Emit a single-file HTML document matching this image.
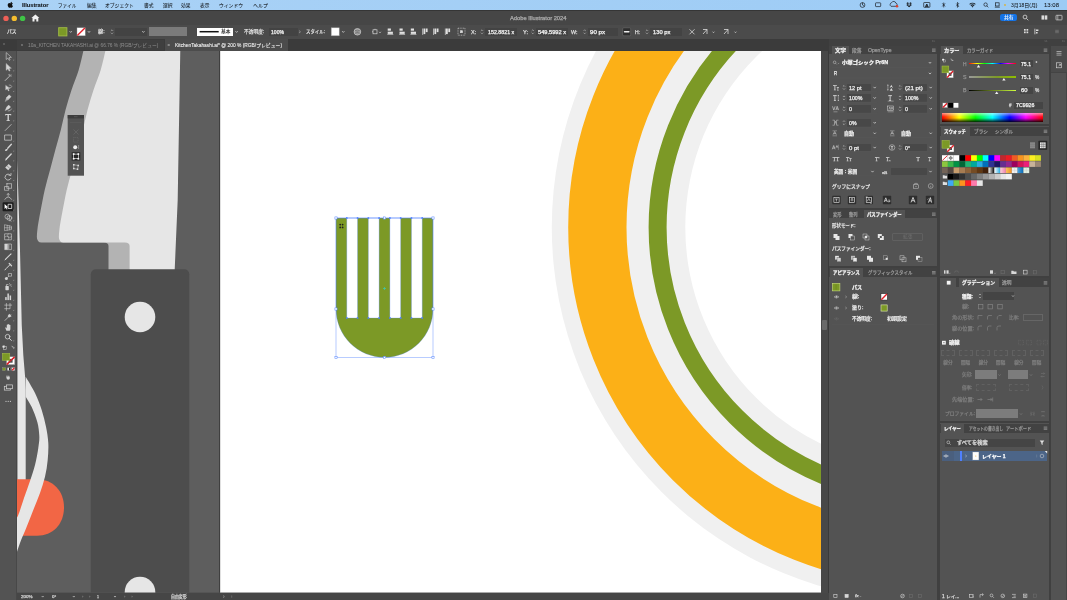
<!DOCTYPE html>
<html lang="ja"><head><meta charset="utf-8"><title>Adobe Illustrator 2024</title><style>
html,body{margin:0;padding:0;background:#535353;}
body{width:1067px;height:600px;overflow:hidden;position:relative;font-family:"Liberation Sans","Noto Sans CJK JP",sans-serif;}
#app{position:absolute;left:0;top:0;width:1067px;height:600px;overflow:hidden;will-change:transform;}
.a{position:absolute;box-sizing:border-box;}
.t{position:absolute;white-space:nowrap;line-height:1;transform-origin:0 50%;display:block;}
svg{position:absolute;left:0;top:0;overflow:visible}
</style></head><body><div id="app">
<svg width="1067" height="600" viewBox="0 0 1067 600"><defs><clipPath id="cv"><rect x="16.5" y="50.5" width="804.5" height="542.0"/></clipPath></defs><g clip-path="url(#cv)"><rect x="16.5" y="50.5" width="804.5" height="542.0" fill="#5e5e5e"/><rect x="220" y="50.5" width="700" height="600" fill="#fff"/><path d="M219.700 50V600" stroke="#303030" stroke-width="0.800"/><circle cx="925.8" cy="227.3" r="374" fill="#f0f0f0"/><circle cx="925.8" cy="227.3" r="328.45" fill="none" stroke="#fcb017" stroke-width="58.3"/><circle cx="925.8" cy="227.3" r="268.2" fill="none" stroke="#7c9926" stroke-width="18"/><circle cx="925.8" cy="227.3" r="240.5" fill="#fff"/><path d="M83.6 50.0C82.8 53.3 80.7 63.3 78.7 70.0C76.7 76.7 73.7 83.3 71.5 90.0C69.3 96.7 67.3 103.3 65.5 110.0C63.7 116.7 62.5 123.3 60.8 130.0C59.1 136.7 57.1 143.3 55.3 150.0C53.5 156.7 51.8 163.3 50.0 170.0C48.2 176.7 46.2 183.3 44.7 190.0C43.2 196.7 41.9 203.7 40.7 210.0C39.5 216.3 38.2 223.7 37.6 228.0C37.0 232.3 37.0 234.7 36.9 236.0Q36.5 242.4 41.5 242.4L104 242.4Q108.5 242.4 108.5 246L108.5 272L160 272L160 50Z" fill="#b3b3b3"/><path d="M105.6 50.0C104.8 53.3 102.7 63.3 100.7 70.0C98.7 76.7 95.7 83.3 93.5 90.0C91.3 96.7 89.3 103.3 87.5 110.0C85.7 116.7 84.5 123.3 82.8 130.0C81.1 136.7 79.1 143.3 77.3 150.0C75.5 156.7 73.8 163.3 72.0 170.0C70.2 176.7 68.2 183.3 66.7 190.0C65.2 196.7 63.9 203.7 62.7 210.0C61.5 216.3 60.2 223.7 59.6 228.0C59.0 232.3 59.0 234.7 58.9 236.0Q58.5 242.4 63.5 242.4L125 242.4Q129.6 242.4 129.6 246L129.6 272L174.6 272L177.7 200L180.3 50Z" fill="#e6e6e6"/><rect x="90.8" y="269.3" width="98.5" height="400" rx="5" fill="#4d4d4d"/><circle cx="140" cy="317" r="15.3" fill="#e6e6e6"/><circle cx="140" cy="592" r="15.3" fill="#e6e6e6"/><path d="M17.2 160L18.5 200L20 250L21.75 325L23.3 355L25.2 378L25.7 390L25.7 480L17.500 480L17.500 250Z" fill="#e6e6e6"/><path d="M10 479.3L37 479.3C53 479.3 64 491 64 507.5C64 524 53 535.7 37 535.7L10 535.7Z" fill="#f26645"/><path d="M25.7 376.7C27.2 379.4 32.3 387.4 35.0 393.0C37.7 398.6 39.9 404.4 41.7 410.0C43.5 415.6 44.9 421.2 46.0 426.7C47.1 432.2 48.0 437.4 48.3 443.0C48.6 448.6 48.2 454.4 47.7 460.0C47.2 465.6 46.3 471.2 45.0 476.7C43.7 482.2 42.0 487.4 40.0 493.0C38.0 498.6 35.5 504.4 33.3 510.0C31.1 515.6 28.9 521.2 26.7 526.7C24.5 532.2 21.9 537.8 20.0 543.0C18.1 548.2 15.8 555.5 15.0 558.0L15.0 520.0C15.6 519.2 16.8 518.7 18.3 515.0C19.8 511.3 22.1 503.7 24.0 498.0C25.9 492.3 28.2 486.5 30.0 481.0C31.8 475.5 33.6 470.5 35.0 465.0C36.4 459.5 37.6 452.8 38.3 448.0C39.0 443.2 39.5 440.3 39.3 436.0C39.1 431.7 38.6 426.8 37.3 422.0C36.0 417.2 33.6 411.2 31.7 407.0C29.8 402.8 26.7 398.4 25.7 396.7L25.7 376.7Z" fill="#e6e6e6"/><path d="M336.0 218.0L433.0 218.0L433.0 309A48.5 48.5 0 0 1 336.0 309ZM346.78 218.0L346.78 317Q346.78 318 347.78 318L356.56 318Q357.56 318 357.56 317L357.56 218.0ZM368.33 218.0L368.33 317Q368.33 318 369.33 318L378.11 318Q379.11 318 379.11 317L379.11 218.0ZM389.89 218.0L389.89 317Q389.89 318 390.89 318L399.67 318Q400.67 318 400.67 317L400.67 218.0ZM411.44 218.0L411.44 317Q411.44 318 412.44 318L421.22 318Q422.22 318 422.22 317L422.22 218.0Z" fill="#7c9926" fill-rule="evenodd"/><rect x="336.0" y="218.0" width="97.0" height="139.5" fill="none" stroke="#4f80ff" stroke-width="0.5" opacity="0.8"/><path d="M336.0 218.0L433.0 218.0L433.0 309A48.5 48.5 0 0 1 336.0 309ZM346.78 218.0L346.78 317Q346.78 318 347.78 318L356.56 318Q357.56 318 357.56 317L357.56 218.0ZM368.33 218.0L368.33 317Q368.33 318 369.33 318L378.11 318Q379.11 318 379.11 317L379.11 218.0ZM389.89 218.0L389.89 317Q389.89 318 390.89 318L399.67 318Q400.67 318 400.67 317L400.67 218.0ZM411.44 218.0L411.44 317Q411.44 318 412.44 318L421.22 318Q422.22 318 422.22 317L422.22 218.0Z" fill="none" stroke="#4f80ff" stroke-width="0.4" opacity="0.7"/><rect x="335.20" y="217.2" width="1.6" height="1.6" fill="#4f80ff"/><rect x="345.98" y="217.2" width="1.6" height="1.6" fill="#4f80ff"/><rect x="356.76" y="217.2" width="1.6" height="1.6" fill="#4f80ff"/><rect x="367.53" y="217.2" width="1.6" height="1.6" fill="#4f80ff"/><rect x="378.31" y="217.2" width="1.6" height="1.6" fill="#4f80ff"/><rect x="389.09" y="217.2" width="1.6" height="1.6" fill="#4f80ff"/><rect x="399.87" y="217.2" width="1.6" height="1.6" fill="#4f80ff"/><rect x="410.64" y="217.2" width="1.6" height="1.6" fill="#4f80ff"/><rect x="421.42" y="217.2" width="1.6" height="1.6" fill="#4f80ff"/><rect x="432.20" y="217.2" width="1.6" height="1.6" fill="#4f80ff"/><rect x="345.98" y="317.2" width="1.6" height="1.6" fill="#4f80ff"/><rect x="356.76" y="317.2" width="1.6" height="1.6" fill="#4f80ff"/><rect x="367.53" y="317.2" width="1.6" height="1.6" fill="#4f80ff"/><rect x="378.31" y="317.2" width="1.6" height="1.6" fill="#4f80ff"/><rect x="389.09" y="317.2" width="1.6" height="1.6" fill="#4f80ff"/><rect x="399.87" y="317.2" width="1.6" height="1.6" fill="#4f80ff"/><rect x="410.64" y="317.2" width="1.6" height="1.6" fill="#4f80ff"/><rect x="421.42" y="317.2" width="1.6" height="1.6" fill="#4f80ff"/><rect x="334.90" y="216.90" width="2.2" height="2.2" fill="#fff" stroke="#4f80ff" stroke-width="0.5"/><rect x="431.90" y="216.90" width="2.2" height="2.2" fill="#fff" stroke="#4f80ff" stroke-width="0.5"/><rect x="334.90" y="356.40" width="2.2" height="2.2" fill="#fff" stroke="#4f80ff" stroke-width="0.5"/><rect x="431.90" y="356.40" width="2.2" height="2.2" fill="#fff" stroke="#4f80ff" stroke-width="0.5"/><rect x="383.40" y="216.90" width="2.2" height="2.2" fill="#fff" stroke="#4f80ff" stroke-width="0.5"/><rect x="383.40" y="356.40" width="2.2" height="2.2" fill="#fff" stroke="#4f80ff" stroke-width="0.5"/><rect x="334.90" y="307.90" width="2.2" height="2.2" fill="#fff" stroke="#4f80ff" stroke-width="0.5"/><rect x="431.90" y="307.90" width="2.2" height="2.2" fill="#fff" stroke="#4f80ff" stroke-width="0.5"/><path d="M383 288.5h3M384.5 287v3" stroke="#3cc9b0" stroke-width="0.7"/><g fill="#222"><circle cx="340.2" cy="224.6" r="0.9"/><circle cx="342.6" cy="224.6" r="0.9"/><circle cx="340.2" cy="227.4" r="0.9"/><circle cx="342.6" cy="227.4" r="0.9"/></g></g></svg>
<div class="a" style="left:0px;top:0px;width:1067px;height:10px;background:linear-gradient(90deg,#aad2f6,#9ccbf5);"></div>
<span class="t" id="t1" style="left:22px;top:4px;font-size:4.9px;color:#14181c;font-weight:bold;-webkit-text-stroke:0.1px #14181c;transform:scaleX(1.170);">Illustrator</span>
<span class="t" id="t2" style="left:58px;top:4px;font-size:4.9px;color:#14181c;-webkit-text-stroke:0.05px #14181c;transform:scaleX(0.945);">ファイル</span>
<span class="t" id="t3" style="left:86.5px;top:4px;font-size:4.9px;color:#14181c;-webkit-text-stroke:0.05px #14181c;transform:scaleX(0.970);">編集</span>
<span class="t" id="t4" style="left:105.3px;top:4px;font-size:4.9px;color:#14181c;-webkit-text-stroke:0.05px #14181c;transform:scaleX(0.984);">オブジェクト</span>
<span class="t" id="t5" style="left:144.3px;top:4px;font-size:4.9px;color:#14181c;-webkit-text-stroke:0.05px #14181c;transform:scaleX(0.970);">書式</span>
<span class="t" id="t6" style="left:163px;top:4px;font-size:4.9px;color:#14181c;-webkit-text-stroke:0.05px #14181c;transform:scaleX(0.970);">選択</span>
<span class="t" id="t7" style="left:180.6px;top:4px;font-size:4.9px;color:#14181c;-webkit-text-stroke:0.05px #14181c;transform:scaleX(0.959);">効果</span>
<span class="t" id="t8" style="left:200px;top:4px;font-size:4.9px;color:#14181c;-webkit-text-stroke:0.05px #14181c;transform:scaleX(0.970);">表示</span>
<span class="t" id="t9" style="left:219px;top:4px;font-size:4.9px;color:#14181c;-webkit-text-stroke:0.05px #14181c;transform:scaleX(0.981);">ウィンドウ</span>
<span class="t" id="t10" style="left:253px;top:4px;font-size:4.9px;color:#14181c;-webkit-text-stroke:0.05px #14181c;transform:scaleX(1.021);">ヘルプ</span>
<span class="t" id="t11" style="left:1011px;top:4px;font-size:4.9px;color:#14181c;-webkit-text-stroke:0.05px #14181c;transform:scaleX(1.016);">3月18日(月)</span>
<span class="t" id="t12" style="left:1043.7px;top:4px;font-size:4.9px;color:#14181c;-webkit-text-stroke:0.05px #14181c;transform:scaleX(1.224);">13:08</span>
<span class="t" id="t13" style="left:925px;top:4px;font-size:4.2px;color:#1b2025;font-weight:bold;-webkit-text-stroke:0.25px #1b2025;transform:scaleX(1.188);">A</span>
<div class="a" style="left:0px;top:10px;width:1067px;height:14.5px;background:#464646;"></div>
<div class="a" style="left:0px;top:10px;width:1067px;height:0.8px;background:#353535;"></div>
<span class="t" id="t14" style="left:510px;top:17px;font-size:4.8px;color:#a8a8a8;-webkit-text-stroke:0.25px #a8a8a8;transform:scaleX(1.204);">Adobe Illustrator 2024</span>
<div class="a" style="left:1000px;top:13.7px;width:17.2px;height:7.6px;background:#1473e6;border-radius:2.2px;"></div>
<span class="t" id="t15" style="left:1003.8px;top:16px;font-size:4.6px;color:#fff;-webkit-text-stroke:0.1px #fff;transform:scaleX(1.043);">共有</span>
<div class="a" style="left:0px;top:24.5px;width:1067px;height:14.5px;background:#4b4b4b;"></div>
<span class="t" id="t16" style="left:6.5px;top:30px;font-size:4.8px;color:#dadada;-webkit-text-stroke:0.25px #dadada;transform:scaleX(0.989);">パス</span>
<span class="t" id="t17" style="left:98.4px;top:30px;font-size:4.8px;color:#dadada;-webkit-text-stroke:0.25px #dadada;transform:scaleX(1.075);">線:</span>
<div class="a" style="left:114.5px;top:27.6px;width:32px;height:8.4px;background:#434343;"></div>
<div class="a" style="left:149.4px;top:27.2px;width:37.8px;height:9px;background:#7b7b7b;"></div>
<div class="a" style="left:197.2px;top:27.6px;width:36px;height:8.2px;background:#fff;"></div>
<span class="t" id="t18" style="left:221px;top:30px;font-size:4.5px;color:#111;-webkit-text-stroke:0.1px #111;transform:scaleX(1.033);">基本</span>
<span class="t" id="t19" style="left:244.4px;top:30px;font-size:4.8px;color:#dadada;-webkit-text-stroke:0.25px #dadada;transform:scaleX(0.984);">不透明度:</span>
<div class="a" style="left:268.7px;top:27.6px;width:29px;height:8.4px;background:#434343;"></div>
<span class="t" id="t20" style="left:271px;top:31px;font-size:4.8px;color:#f0f0f0;-webkit-text-stroke:0.25px #f0f0f0;transform:scaleX(1.059);">100%</span>
<span class="t" id="t21" style="left:306px;top:30px;font-size:4.8px;color:#dadada;-webkit-text-stroke:0.25px #dadada;transform:scaleX(0.925);">スタイル:</span>
<span class="t" id="t22" style="left:471.3px;top:31px;font-size:4.8px;color:#dadada;-webkit-text-stroke:0.25px #dadada;transform:scaleX(1.144);">X:</span>
<div class="a" style="left:485px;top:27.6px;width:31.5px;height:8.4px;background:#434343;"></div>
<span class="t" id="t23" style="left:487.8px;top:31px;font-size:4.8px;color:#f0f0f0;-webkit-text-stroke:0.25px #f0f0f0;transform:scaleX(1.103);">152.8821 x</span>
<span class="t" id="t24" style="left:522.5px;top:31px;font-size:4.8px;color:#dadada;-webkit-text-stroke:0.25px #dadada;transform:scaleX(1.168);">Y:</span>
<div class="a" style="left:535.6px;top:27.6px;width:32px;height:8.4px;background:#434343;"></div>
<span class="t" id="t25" style="left:538.4px;top:31px;font-size:4.8px;color:#f0f0f0;-webkit-text-stroke:0.25px #f0f0f0;transform:scaleX(1.183);">549.5992 x</span>
<span class="t" id="t26" style="left:571px;top:31px;font-size:4.8px;color:#dadada;-webkit-text-stroke:0.25px #dadada;transform:scaleX(1.124);">W:</span>
<div class="a" style="left:587.7px;top:27.6px;width:30px;height:8.4px;background:#434343;"></div>
<span class="t" id="t27" style="left:590px;top:31px;font-size:4.8px;color:#f0f0f0;-webkit-text-stroke:0.25px #f0f0f0;transform:scaleX(1.277);">90 px</span>
<span class="t" id="t28" style="left:634.5px;top:31px;font-size:4.8px;color:#dadada;-webkit-text-stroke:0.25px #dadada;transform:scaleX(1.039);">H:</span>
<div class="a" style="left:650px;top:27.6px;width:31.5px;height:8.4px;background:#434343;"></div>
<span class="t" id="t29" style="left:652.7px;top:31px;font-size:4.8px;color:#f0f0f0;-webkit-text-stroke:0.25px #f0f0f0;transform:scaleX(1.201);">130 px</span>
<div class="a" style="left:0px;top:39px;width:1067px;height:11.5px;background:#3b3b3b;"></div>
<div class="a" style="left:17px;top:39.6px;width:147px;height:10.9px;background:#3f3f3f;"></div>
<div class="a" style="left:164.5px;top:39.4px;width:123px;height:11.2px;background:#4c4c4c;"></div>
<span class="t" id="t30" style="left:28px;top:44px;font-size:4.6px;color:#8e8e8e;transform:scaleX(1.045);">10a_KITCHEN TAKAHASHI.ai @ 66.76 % (RGB/プレビュー)</span>
<span class="t" id="t31" style="left:175px;top:44px;font-size:4.6px;color:#ececec;-webkit-text-stroke:0.1px #ececec;transform:scaleX(1.055);">KitchenTakahashi.ai* @ 200 % (RGB/プレビュー)</span>
<div class="a" style="left:0px;top:39px;width:17px;height:11.5px;background:#3b3b3b;"></div>
<div class="a" style="left:0px;top:50.5px;width:16.6px;height:549.5px;background:#535353;"></div>
<div class="a" style="left:16.2px;top:50.5px;width:0.5px;height:549.5px;background:#484848;"></div>
<div class="a" style="left:16.6px;top:592.7px;width:804.4px;height:7.3px;background:#464646;"></div>
<span class="t" id="t32" style="left:21px;top:595px;font-size:4.4px;color:#d0d0d0;-webkit-text-stroke:0.25px #d0d0d0;transform:scaleX(1.033);">200%</span>
<span class="t" id="t33" style="left:51.7px;top:595px;font-size:4.4px;color:#d0d0d0;-webkit-text-stroke:0.25px #d0d0d0;transform:scaleX(1.023);">0°</span>
<span class="t" id="t34" style="left:97px;top:595px;font-size:4.4px;color:#d0d0d0;-webkit-text-stroke:0.25px #d0d0d0;transform:scaleX(0.815);">1</span>
<span class="t" id="t35" style="left:171px;top:595px;font-size:4.2px;color:#d0d0d0;-webkit-text-stroke:0.25px #d0d0d0;transform:scaleX(0.936);">自由変形</span>
<div class="a" style="left:821px;top:50.5px;width:6.6px;height:549.5px;background:#484848;"></div>
<div class="a" style="left:827.6px;top:50.5px;width:2px;height:549.5px;background:#3a3a3a;"></div>
<div class="a" style="left:822px;top:320px;width:4.6px;height:9.5px;background:#6a6a6a;border-radius:1px;"></div>
<div class="a" style="left:821px;top:592.7px;width:8.6px;height:7.3px;background:#464646;"></div>
<div class="a" style="left:829px;top:39px;width:238px;height:561px;background:#404040;"></div>
<div class="a" style="left:829.3px;top:45.5px;width:108.2px;height:554.5px;background:#535353;"></div>
<div class="a" style="left:939.9px;top:45.5px;width:109.4px;height:554.5px;background:#535353;"></div>
<div class="a" style="left:1051.3px;top:45.6px;width:15.7px;height:554.4px;background:#535353;"></div>
<div class="a" style="left:1066.3px;top:45.6px;width:0.7px;height:554.4px;background:#454545;"></div>
<div class="a" style="left:829.3px;top:45.6px;width:108.2px;height:8.8px;background:#424242;"></div>
<div class="a" style="left:831.5px;top:45.6px;width:17.5px;height:8.8px;background:#535353;"></div>
<span class="t" id="t36" style="left:834.5px;top:49px;font-size:4.7px;color:#f4f4f4;font-weight:bold;-webkit-text-stroke:0.25px #f4f4f4;transform:scaleX(1.171);">文字</span>
<span class="t" id="t37" style="left:851.5px;top:49px;font-size:4.7px;color:#989898;-webkit-text-stroke:0.25px #989898;transform:scaleX(1.012);">段落</span>
<span class="t" id="t38" style="left:868px;top:49px;font-size:4.7px;color:#989898;-webkit-text-stroke:0.25px #989898;transform:scaleX(1.086);">OpenType</span>
<span class="t" id="t39" style="left:842px;top:61px;font-size:4.8px;color:#f4f4f4;font-weight:bold;-webkit-text-stroke:0.25px #f4f4f4;transform:scaleX(1.113);">小塚ゴシック Pr6N</span>
<span class="t" id="t40" style="left:833.7px;top:72px;font-size:4.8px;color:#ececec;-webkit-text-stroke:0.25px #ececec;transform:scaleX(0.894);">R</span>
<div class="a" style="left:847.3px;top:83.6px;width:24.2px;height:7.8px;background:#484848;border-radius:0.8px;"></div>
<span class="t" id="t41" style="left:849px;top:87px;font-size:4.8px;color:#ececec;-webkit-text-stroke:0.25px #ececec;transform:scaleX(1.171);">12 pt</span>
<div class="a" style="left:903.3px;top:83.6px;width:24.2px;height:7.8px;background:#484848;border-radius:0.8px;"></div>
<span class="t" id="t42" style="left:905px;top:87px;font-size:4.8px;color:#ececec;-webkit-text-stroke:0.25px #ececec;transform:scaleX(1.276);">(21 pt)</span>
<div class="a" style="left:847.3px;top:94px;width:24.2px;height:7.8px;background:#484848;border-radius:0.8px;"></div>
<span class="t" id="t43" style="left:849px;top:97px;font-size:4.8px;color:#ececec;-webkit-text-stroke:0.25px #ececec;transform:scaleX(1.099);">100%</span>
<div class="a" style="left:903.3px;top:94px;width:24.2px;height:7.8px;background:#484848;border-radius:0.8px;"></div>
<span class="t" id="t44" style="left:905px;top:97px;font-size:4.8px;color:#ececec;-webkit-text-stroke:0.25px #ececec;transform:scaleX(1.099);">100%</span>
<div class="a" style="left:847.3px;top:104.9px;width:24.2px;height:7.8px;background:#484848;border-radius:0.8px;"></div>
<span class="t" id="t45" style="left:849px;top:108px;font-size:4.8px;color:#ececec;-webkit-text-stroke:0.25px #ececec;transform:scaleX(1.123);">0</span>
<div class="a" style="left:903.3px;top:104.9px;width:24.2px;height:7.8px;background:#484848;border-radius:0.8px;"></div>
<span class="t" id="t46" style="left:905px;top:108px;font-size:4.8px;color:#ececec;-webkit-text-stroke:0.25px #ececec;transform:scaleX(1.123);">0</span>
<div class="a" style="left:847.3px;top:118.8px;width:24.2px;height:7.8px;background:#484848;border-radius:0.8px;"></div>
<span class="t" id="t47" style="left:849px;top:122px;font-size:4.8px;color:#ececec;-webkit-text-stroke:0.25px #ececec;transform:scaleX(1.081);">0%</span>
<span class="t" id="t48" style="left:843.5px;top:132px;font-size:4.8px;color:#ececec;font-weight:bold;-webkit-text-stroke:0.25px #ececec;transform:scaleX(1.041);">自動</span>
<span class="t" id="t49" style="left:900.5px;top:132px;font-size:4.8px;color:#ececec;font-weight:bold;-webkit-text-stroke:0.25px #ececec;transform:scaleX(1.041);">自動</span>
<div class="a" style="left:847.3px;top:143.6px;width:24.2px;height:7.8px;background:#484848;border-radius:0.8px;"></div>
<span class="t" id="t50" style="left:849px;top:147px;font-size:4.8px;color:#ececec;-webkit-text-stroke:0.25px #ececec;transform:scaleX(1.248);">0 pt</span>
<div class="a" style="left:903.3px;top:143.6px;width:24.2px;height:7.8px;background:#484848;border-radius:0.8px;"></div>
<span class="t" id="t51" style="left:905px;top:147px;font-size:4.8px;color:#ececec;-webkit-text-stroke:0.25px #ececec;transform:scaleX(1.088);">0°</span>
<span class="t" id="t52" style="left:832.8px;top:157px;font-size:5.2px;color:#d0d0d0;-webkit-text-stroke:0.25px #d0d0d0;font-family:'Liberation Serif',serif;">TT</span>
<span class="t" id="t53" style="left:846px;top:157px;font-size:5.2px;color:#d0d0d0;-webkit-text-stroke:0.25px #d0d0d0;font-family:'Liberation Serif',serif;">T</span>
<span class="t" id="t54" style="left:849.2px;top:159px;font-size:3.8px;color:#d0d0d0;-webkit-text-stroke:0.25px #d0d0d0;font-family:'Liberation Serif',serif;">T</span>
<span class="t" id="t55" style="left:875px;top:157px;font-size:5.2px;color:#d0d0d0;-webkit-text-stroke:0.25px #d0d0d0;font-family:'Liberation Serif',serif;">T</span>
<span class="t" id="t56" style="left:878.3px;top:157px;font-size:2.6px;color:#d0d0d0;-webkit-text-stroke:0.25px #d0d0d0;font-family:'Liberation Serif',serif;">1</span>
<span class="t" id="t57" style="left:886px;top:157px;font-size:5.2px;color:#d0d0d0;-webkit-text-stroke:0.25px #d0d0d0;font-family:'Liberation Serif',serif;">T</span>
<span class="t" id="t58" style="left:889.3px;top:160px;font-size:2.6px;color:#d0d0d0;-webkit-text-stroke:0.25px #d0d0d0;font-family:'Liberation Serif',serif;">1</span>
<span class="t" id="t59" style="left:916.5px;top:157px;font-size:5.2px;color:#d0d0d0;-webkit-text-stroke:0.25px #d0d0d0;font-family:'Liberation Serif',serif;">T</span>
<span class="t" id="t60" style="left:928px;top:157px;font-size:5.2px;color:#d0d0d0;-webkit-text-stroke:0.25px #d0d0d0;font-family:'Liberation Serif',serif;">T</span>
<span class="t" id="t61" style="left:833.5px;top:170px;font-size:4.8px;color:#ececec;font-weight:bold;-webkit-text-stroke:0.25px #ececec;transform:scaleX(0.958);">英語：米国</span>
<span class="t" id="t62" style="left:881.5px;top:172px;font-size:3.8px;color:#cfcfcf;-webkit-text-stroke:0.25px #cfcfcf;transform:scaleX(1.176);">a</span>
<span class="t" id="t63" style="left:884px;top:170px;font-size:5px;color:#cfcfcf;-webkit-text-stroke:0.25px #cfcfcf;transform:scaleX(1.151);">a</span>
<div class="a" style="left:890.7px;top:167.6px;width:36.5px;height:7.8px;background:#484848;border-radius:0.8px;"></div>
<span class="t" id="t64" style="left:832px;top:185px;font-size:4.8px;color:#e4e4e4;-webkit-text-stroke:0.25px #e4e4e4;transform:scaleX(0.990);">グリフにスナップ</span>
<div class="a" style="left:829.3px;top:207.5px;width:108.2px;height:2.2px;background:#404040;"></div>
<div class="a" style="left:829.3px;top:209.7px;width:108.2px;height:8.6px;background:#424242;"></div>
<span class="t" id="t65" style="left:833px;top:213px;font-size:4.7px;color:#989898;-webkit-text-stroke:0.25px #989898;transform:scaleX(0.905);">変形</span>
<span class="t" id="t66" style="left:848.8px;top:213px;font-size:4.7px;color:#989898;-webkit-text-stroke:0.25px #989898;transform:scaleX(0.905);">整列</span>
<div class="a" style="left:864px;top:209.7px;width:41px;height:8.6px;background:#535353;"></div>
<span class="t" id="t67" style="left:867px;top:213px;font-size:4.7px;color:#f4f4f4;font-weight:bold;-webkit-text-stroke:0.25px #f4f4f4;transform:scaleX(0.920);">パスファインダー</span>
<span class="t" id="t68" style="left:832px;top:224px;font-size:4.7px;color:#e4e4e4;-webkit-text-stroke:0.25px #e4e4e4;transform:scaleX(0.949);">形状モード:</span>
<div class="a" style="left:892px;top:232.6px;width:31px;height:8.6px;border:0.4px solid #606060;border-radius:1px;"></div>
<span class="t" id="t69" style="left:902.5px;top:235px;font-size:4.6px;color:#707070;transform:scaleX(1.032);">拡張</span>
<span class="t" id="t70" style="left:832px;top:247px;font-size:4.7px;color:#e4e4e4;-webkit-text-stroke:0.25px #e4e4e4;transform:scaleX(0.992);">パスファインダー:</span>
<div class="a" style="left:829.3px;top:265.8px;width:108.2px;height:2.2px;background:#404040;"></div>
<div class="a" style="left:829.3px;top:268px;width:108.2px;height:9px;background:#424242;"></div>
<div class="a" style="left:830.3px;top:268px;width:33.2px;height:9px;background:#535353;"></div>
<span class="t" id="t71" style="left:833.3px;top:271px;font-size:4.7px;color:#f4f4f4;font-weight:bold;-webkit-text-stroke:0.25px #f4f4f4;transform:scaleX(0.952);">アピアランス</span>
<span class="t" id="t72" style="left:867.5px;top:271px;font-size:4.7px;color:#989898;-webkit-text-stroke:0.25px #989898;transform:scaleX(0.954);">グラフィックスタイル</span>
<span class="t" id="t73" style="left:852px;top:286px;font-size:4.8px;color:#f4f4f4;font-weight:bold;-webkit-text-stroke:0.25px #f4f4f4;transform:scaleX(1.041);">パス</span>
<span class="t" id="t74" style="left:852px;top:295px;font-size:4.8px;color:#ececec;-webkit-text-stroke:0.25px #ececec;transform:scaleX(1.221);">線:</span>
<span class="t" id="t75" style="left:852px;top:306px;font-size:4.8px;color:#ececec;-webkit-text-stroke:0.25px #ececec;transform:scaleX(1.051);">塗り:</span>
<span class="t" id="t76" style="left:852px;top:317px;font-size:4.8px;color:#ececec;-webkit-text-stroke:0.25px #ececec;transform:scaleX(0.974);">不透明度:</span>
<span class="t" id="t77" style="left:886.7px;top:317px;font-size:4.8px;color:#ececec;-webkit-text-stroke:0.25px #ececec;transform:scaleX(1.041);">初期設定</span>
<span class="t" id="t78" style="left:855.2px;top:594px;font-size:4px;color:#d8d8d8;-webkit-text-stroke:0.25px #d8d8d8;transform:scaleX(1.216);font-style:italic;">fx</span>
<div class="a" style="left:939.9px;top:45.6px;width:109.4px;height:8.8px;background:#424242;"></div>
<div class="a" style="left:941px;top:45.6px;width:22px;height:8.8px;background:#535353;"></div>
<span class="t" id="t79" style="left:944px;top:49px;font-size:4.7px;color:#f4f4f4;font-weight:bold;-webkit-text-stroke:0.25px #f4f4f4;transform:scaleX(1.101);">カラー</span>
<span class="t" id="t80" style="left:966.8px;top:49px;font-size:4.7px;color:#989898;-webkit-text-stroke:0.25px #989898;transform:scaleX(0.931);">カラーガイド</span>
<span class="t" id="t81" style="left:962.5px;top:63px;font-size:4.8px;color:#8e8e8e;-webkit-text-stroke:0.25px #8e8e8e;transform:scaleX(1.009);">H</span>
<div class="a" style="left:968.7px;top:62.9px;width:47.3px;height:1.5px;background:linear-gradient(90deg,#f00,#ff0 17%,#0f0 33%,#0ff 50%,#00f 67%,#f0f 83%,#f00);"></div>
<div class="a" style="left:1019.5px;top:60.3px;width:13px;height:6.8px;background:#454545;"></div>
<span class="t" id="t82" style="left:1021px;top:63px;font-size:4.8px;color:#f0f0f0;-webkit-text-stroke:0.25px #f0f0f0;transform:scaleX(1.070);">75.1</span>
<span class="t" id="t83" style="left:1035.5px;top:62px;font-size:4.8px;color:#d8d8d8;-webkit-text-stroke:0.25px #d8d8d8;">°</span>
<span class="t" id="t84" style="left:962.5px;top:76px;font-size:4.8px;color:#8e8e8e;-webkit-text-stroke:0.25px #8e8e8e;transform:scaleX(1.093);">S</span>
<div class="a" style="left:968.7px;top:76.1px;width:47.3px;height:1.5px;background:linear-gradient(90deg,#999,#7c9926 60%,#8fbf00);"></div>
<div class="a" style="left:1019.5px;top:73.5px;width:13px;height:6.8px;background:#454545;"></div>
<span class="t" id="t85" style="left:1021px;top:76px;font-size:4.8px;color:#f0f0f0;-webkit-text-stroke:0.25px #f0f0f0;transform:scaleX(1.070);">75.1</span>
<span class="t" id="t86" style="left:1035px;top:76px;font-size:4.8px;color:#d8d8d8;-webkit-text-stroke:0.25px #d8d8d8;">%</span>
<span class="t" id="t87" style="left:962.5px;top:89px;font-size:4.8px;color:#8e8e8e;-webkit-text-stroke:0.25px #8e8e8e;transform:scaleX(1.093);">B</span>
<div class="a" style="left:968.7px;top:89.5px;width:47.3px;height:1.5px;background:linear-gradient(90deg,#000,#7c9926 60%,#cfff3f);"></div>
<div class="a" style="left:1019.5px;top:86.9px;width:13px;height:6.8px;background:#454545;"></div>
<span class="t" id="t88" style="left:1021px;top:89px;font-size:4.8px;color:#f0f0f0;-webkit-text-stroke:0.25px #f0f0f0;transform:scaleX(1.216);">60</span>
<span class="t" id="t89" style="left:1035px;top:89px;font-size:4.8px;color:#d8d8d8;-webkit-text-stroke:0.25px #d8d8d8;">%</span>
<span class="t" id="t90" style="left:1008.5px;top:104px;font-size:4.8px;color:#d0d0d0;-webkit-text-stroke:0.25px #d0d0d0;transform:scaleX(0.936);">#</span>
<div class="a" style="left:1014px;top:101.9px;width:28.5px;height:7px;background:#454545;"></div>
<span class="t" id="t91" style="left:1016px;top:104px;font-size:4.8px;color:#f0f0f0;-webkit-text-stroke:0.25px #f0f0f0;transform:scaleX(1.100);">7C9926</span>
<div class="a" style="left:942px;top:112.5px;width:100.8px;height:9.6px;background:linear-gradient(180deg,rgba(255,255,255,.55),rgba(255,255,255,0) 45%,rgba(0,0,0,0) 55%,rgba(0,0,0,.85)),linear-gradient(90deg,#f00,#ff0 17%,#0f0 33%,#0ff 50%,#00f 67%,#f0f 83%,#f00);"></div>
<div class="a" style="left:939.9px;top:124.3px;width:109.4px;height:2.2px;background:#404040;"></div>
<div class="a" style="left:939.9px;top:126.5px;width:109.4px;height:9.3px;background:#424242;"></div>
<div class="a" style="left:941px;top:126.5px;width:28.5px;height:9.3px;background:#535353;"></div>
<span class="t" id="t92" style="left:944px;top:130px;font-size:4.7px;color:#f4f4f4;font-weight:bold;-webkit-text-stroke:0.25px #f4f4f4;transform:scaleX(0.938);">スウォッチ</span>
<span class="t" id="t93" style="left:973.5px;top:130px;font-size:4.7px;color:#989898;-webkit-text-stroke:0.25px #989898;transform:scaleX(0.987);">ブラシ</span>
<span class="t" id="t94" style="left:994.8px;top:130px;font-size:4.7px;color:#989898;-webkit-text-stroke:0.25px #989898;transform:scaleX(0.954);">シンボル</span>
<div class="a" style="left:939.9px;top:276px;width:109.4px;height:2.2px;background:#404040;"></div>
<div class="a" style="left:939.9px;top:278.2px;width:109.4px;height:9px;background:#424242;"></div>
<div class="a" style="left:959px;top:278.2px;width:39.5px;height:9px;background:#535353;"></div>
<span class="t" id="t95" style="left:962px;top:281px;font-size:4.7px;color:#f4f4f4;font-weight:bold;-webkit-text-stroke:0.25px #f4f4f4;transform:scaleX(1.008);">グラデーション</span>
<span class="t" id="t96" style="left:1002px;top:281px;font-size:4.7px;color:#989898;-webkit-text-stroke:0.25px #989898;transform:scaleX(1.012);">透明</span>
<div class="a" style="left:939.9px;top:278.2px;width:16px;height:9px;background:#535353;"></div>
<span class="t" id="t97" style="left:962px;top:295px;font-size:4.7px;color:#f4f4f4;font-weight:bold;-webkit-text-stroke:0.25px #f4f4f4;transform:scaleX(0.987);">種類:</span>
<div class="a" style="left:983.3px;top:292.3px;width:31px;height:7.6px;background:#444;"></div>
<span class="t" id="t98" style="left:962px;top:305px;font-size:4.7px;color:#7d7d7d;-webkit-text-stroke:0.25px #7d7d7d;transform:scaleX(1.250);">線:</span>
<span class="t" id="t99" style="left:952px;top:316px;font-size:4.7px;color:#7d7d7d;-webkit-text-stroke:0.25px #7d7d7d;transform:scaleX(1.097);">角の形状:</span>
<span class="t" id="t100" style="left:1008.7px;top:316px;font-size:4.7px;color:#7d7d7d;-webkit-text-stroke:0.25px #7d7d7d;transform:scaleX(0.964);">比率:</span>
<div class="a" style="left:1023.3px;top:313.8px;width:20px;height:7.2px;border:0.4px solid #666;"></div>
<span class="t" id="t101" style="left:952px;top:327px;font-size:4.7px;color:#7d7d7d;-webkit-text-stroke:0.25px #7d7d7d;transform:scaleX(1.097);">線の位置:</span>
<span class="t" id="t102" style="left:948.7px;top:341px;font-size:4.7px;color:#f4f4f4;font-weight:bold;-webkit-text-stroke:0.25px #f4f4f4;transform:scaleX(1.129);">破線</span>
<div class="a" style="left:940.9px;top:349.5px;width:14px;height:6.6px;border:0.4px dashed #616161;"></div>
<div class="a" style="left:958.5px;top:349.5px;width:14px;height:6.6px;border:0.4px dashed #616161;"></div>
<div class="a" style="left:976.3px;top:349.5px;width:14px;height:6.6px;border:0.4px dashed #616161;"></div>
<div class="a" style="left:993.7px;top:349.5px;width:14px;height:6.6px;border:0.4px dashed #616161;"></div>
<div class="a" style="left:1011.8px;top:349.5px;width:14px;height:6.6px;border:0.4px dashed #616161;"></div>
<div class="a" style="left:1029.7px;top:349.5px;width:14px;height:6.6px;border:0.4px dashed #616161;"></div>
<span class="t" id="t103" style="left:943.3px;top:361px;font-size:4.6px;color:#7d7d7d;-webkit-text-stroke:0.25px #7d7d7d;transform:scaleX(1.000);">線分</span>
<span class="t" id="t104" style="left:960.9px;top:361px;font-size:4.6px;color:#7d7d7d;-webkit-text-stroke:0.25px #7d7d7d;transform:scaleX(1.000);">間隔</span>
<span class="t" id="t105" style="left:978.7px;top:361px;font-size:4.6px;color:#7d7d7d;-webkit-text-stroke:0.25px #7d7d7d;transform:scaleX(1.000);">線分</span>
<span class="t" id="t106" style="left:996.1px;top:361px;font-size:4.6px;color:#7d7d7d;-webkit-text-stroke:0.25px #7d7d7d;transform:scaleX(1.000);">間隔</span>
<span class="t" id="t107" style="left:1014.2px;top:361px;font-size:4.6px;color:#7d7d7d;-webkit-text-stroke:0.25px #7d7d7d;transform:scaleX(1.000);">線分</span>
<span class="t" id="t108" style="left:1032.1px;top:361px;font-size:4.6px;color:#7d7d7d;-webkit-text-stroke:0.25px #7d7d7d;transform:scaleX(1.000);">間隔</span>
<span class="t" id="t109" style="left:962px;top:373px;font-size:4.7px;color:#7d7d7d;-webkit-text-stroke:0.25px #7d7d7d;transform:scaleX(0.964);">矢印:</span>
<div class="a" style="left:975.3px;top:370px;width:21.4px;height:9.2px;background:#7c7c7c;"></div>
<div class="a" style="left:1008px;top:370px;width:20px;height:9.2px;background:#7c7c7c;"></div>
<span class="t" id="t110" style="left:962px;top:386px;font-size:4.7px;color:#7d7d7d;-webkit-text-stroke:0.25px #7d7d7d;transform:scaleX(0.964);">倍率:</span>
<div class="a" style="left:976px;top:384px;width:20px;height:7px;border:0.4px dashed #616161;"></div>
<div class="a" style="left:1008.5px;top:384px;width:20px;height:7px;border:0.4px dashed #616161;"></div>
<span class="t" id="t111" style="left:952px;top:398px;font-size:4.7px;color:#7d7d7d;-webkit-text-stroke:0.25px #7d7d7d;transform:scaleX(1.097);">先端位置:</span>
<span class="t" id="t112" style="left:944.7px;top:412px;font-size:4.7px;color:#7d7d7d;-webkit-text-stroke:0.25px #7d7d7d;transform:scaleX(1.019);">プロファイル:</span>
<div class="a" style="left:976px;top:409.3px;width:42px;height:8.8px;background:#7c7c7c;"></div>
<div class="a" style="left:939.9px;top:421.3px;width:109.4px;height:2.2px;background:#404040;"></div>
<div class="a" style="left:939.9px;top:423.5px;width:109.4px;height:9px;background:#424242;"></div>
<div class="a" style="left:941px;top:423.5px;width:23.2px;height:9px;background:#535353;"></div>
<span class="t" id="t113" style="left:944px;top:427px;font-size:4.7px;color:#f4f4f4;font-weight:bold;-webkit-text-stroke:0.25px #f4f4f4;transform:scaleX(0.897);">レイヤー</span>
<span class="t" id="t114" style="left:968.7px;top:427px;font-size:4.7px;color:#989898;-webkit-text-stroke:0.25px #989898;transform:scaleX(0.810);">アセットの書き出し</span>
<span class="t" id="t115" style="left:1006px;top:427px;font-size:4.7px;color:#989898;-webkit-text-stroke:0.25px #989898;transform:scaleX(0.908);">アートボード</span>
<div class="a" style="left:944.7px;top:438.7px;width:90.2px;height:8px;background:#454545;"></div>
<span class="t" id="t116" style="left:956.7px;top:441px;font-size:4.7px;color:#d6d6d6;font-weight:bold;-webkit-text-stroke:0.25px #d6d6d6;transform:scaleX(1.112);">すべてを検索</span>
<div class="a" style="left:942px;top:450.7px;width:105.4px;height:10.7px;background:#4c6588;"></div>
<div class="a" style="left:942px;top:450.7px;width:12px;height:10.7px;background:#4a5f7e;"></div>
<div class="a" style="left:960px;top:451.3px;width:1.7px;height:9.5px;background:#4f80ff;"></div>
<span class="t" id="t117" style="left:982px;top:455px;font-size:4.8px;color:#fff;font-weight:bold;-webkit-text-stroke:0.25px #fff;transform:scaleX(1.020);">レイヤー 1</span>
<span class="t" id="t118" style="left:942px;top:595px;font-size:4.5px;color:#dcdcdc;-webkit-text-stroke:0.25px #dcdcdc;transform:scaleX(1.047);">1 レイ...</span>
<div class="a" style="left:1051.3px;top:45.6px;width:15.7px;height:27px;background:#4b4b4b;"></div>
<div class="a" style="left:1051.3px;top:72.4px;width:15.7px;height:0.6px;background:#444;"></div>
<svg width="1067" height="600" viewBox="0 0 1067 600"><path d="M11.9 3.1c-.5 0-1 .3-1.3.3-.3 0-.8-.3-1.2-.3-.9 0-1.7.8-1.7 2 0 1.300.9 2.700 1.600 2.700.400 0 .6-.25 1.100-.25s.65.25 1.100.25c.7 0 1.300-1.100 1.500-1.700-.7-.3-.95-.9-.95-1.400 0-.6.35-1.100.8-1.300-.3-.4-.7-.6-1.050-.6zM11.500 2.900c.3-.3.45-.75.4-1.200-.4.05-.8.3-1.050.6-.25.3-.4.7-.35 1.100.4 0 .75-.2 1-.5z" fill="#111"/><g fill="none" stroke="#1b2025" stroke-width="0.7"><circle cx="862.5" cy="5" r="2.4"/><path d="M862.5 5v-2.400M862.500 5l1.800 1.300" /><rect x="875.5" y="2.800" width="5.200" height="3.800" rx="0.6"/><path d="M891 6.300a2 2 0 0 1 .600-3.600a2.300 2.300 0 0 1 4.300.500a1.600 1.600 0 0 1 .100 3.100z"/><rect x="923.700" y="2.500" width="6.200" height="4.800" rx="0.5"/><path d="M942.300 3.400l2.800 3M945.100 3.400l-2.800 3M943.700 2.600v4.800"/><path d="M956.300 3.600l2.400 2.600-1.200 1.200v-5l1.200 1.200-2.400 2.600"/><circle cx="985.600" cy="4.600" r="1.700"/><path d="M986.800 5.800l1.500 1.600"/><rect x="995.500" y="2.800" width="3.600" height="3.200"/><path d="M994.800 7.200h5"/></g><circle cx="897" cy="6.3" r="1.300" fill="#e0402a"/><path d="M906.300 3.200l1.400-.9 1.400.9-1.400.9zM909.100 3.200l1.400-.9 1.400.9-1.400.9zM906.300 5l1.400-.9 1.400.9-1.400.9zM909.100 5l1.400-.9 1.400.9-1.400.9zM907.700 6.300l1.400-.9 1.400.9-1.400.9z" fill="#1b2025"/><path d="M969.300 4.100a4.600 4.600 0 0 1 6.400 0l-.7.700a3.600 3.600 0 0 0-5 0zM970.500 5.300a2.900 2.900 0 0 1 4 0l-.7.700a1.900 1.900 0 0 0-2.600 0zM972.500 7.500l-1-1a1.400 1.400 0 0 1 2 0z" fill="#1b2025"/><circle cx="1005" cy="5" r="0.900" fill="#d9b23a"/><circle cx="6" cy="18.4" r="2.700" fill="#ed5f57"/><circle cx="14.300" cy="18.400" r="2.700" fill="#f5bd2e"/><circle cx="22.600" cy="18.400" r="2.700" fill="#3fc446"/><path d="M35.400 14.600l4 3.500h-1.100v3.400h-2v-2.300h-1.800v2.300h-2v-3.400h-1.100z" fill="#f0f0f0"/><g fill="none" stroke="#d8d8d8" stroke-width="0.8"><circle cx="1025" cy="17" r="1.900"/><path d="M1026.400 18.400l1.900 1.900"/></g><rect x="1041.500" y="15.400" width="2.600" height="4.200" fill="#dcdcdc"/><rect x="1044.700" y="15.400" width="2.600" height="4.200" fill="#dcdcdc"/><rect x="1056" y="15.300" width="6" height="4.600" rx="0.500" fill="none" stroke="#dcdcdc" stroke-width="0.700"/><path d="M1057.800 15.300v4.600" stroke="#dcdcdc" stroke-width="0.600"/><rect x="58.700" y="27.700" width="8.200" height="8.200" fill="#7c9926" stroke="#a3bd45" stroke-width="0.900"/><path d="M69.55 31.15L70.70 32.45L71.85 31.15" fill="none" stroke="#d4d4d4" stroke-width="0.75"/><rect x="77" y="27.8" width="8.2" height="8" fill="#fff" stroke="#999" stroke-width="0.4"/><path d="M77.3 35.5L84.9 28.1" stroke="#e0202a" stroke-width="1.400"/><path d="M87.85 31.15L89.00 32.45L90.15 31.15" fill="none" stroke="#d4d4d4" stroke-width="0.75"/><path d="M110.90 30.90L112.00 29.80L113.10 30.90M110.90 32.70L112.00 33.80L113.10 32.70" fill="none" stroke="#c8c8c8" stroke-width="0.6"/><path d="M142.25 31.15L143.40 32.45L144.55 31.15" fill="none" stroke="#d4d4d4" stroke-width="0.75"/><path d="M199.600 31.700h19.100" stroke="#111" stroke-width="1.500"/><path d="M235.45 31.15L236.60 32.45L237.75 31.15" fill="none" stroke="#d4d4d4" stroke-width="0.75"/><path d="M299.20 30.70L300.40 31.80L299.20 32.90" fill="none" stroke="#c8c8c8" stroke-width="0.6"/><rect x="331.200" y="27.800" width="8" height="8" fill="#fff" stroke="#999" stroke-width="0.500"/><path d="M342.15 31.15L343.30 32.45L344.45 31.15" fill="none" stroke="#d4d4d4" stroke-width="0.75"/><circle cx="357.400" cy="31.800" r="3.300" fill="#9a9a9a" stroke="#d0d0d0" stroke-width="0.700"/><path d="M355 30.300q2.400 1.500 4.800 0M355 33.300q2.400-1.500 4.800 0" stroke="#555" stroke-width="0.500" fill="none"/><g stroke="#d8d8d8" stroke-width="0.700" fill="none"><rect x="373" y="29.800" width="4" height="4"/><path d="M372 31.800h1M375 28.800v1"/></g><path d="M379.10 31.80L380.00 32.80L380.90 31.80" fill="none" stroke="#d4d4d4" stroke-width="0.75"/><g fill="#e0e0e0"><rect x="387.7" y="28.5" width="3.200" height="2.200"/><rect x="387.7" y="31.7" width="5.200" height="2.200"/><rect x="387.3" y="34.3" width="6" height="0.600"/></g><g fill="#e0e0e0"><rect x="399.5" y="28.5" width="3.200" height="2.200"/><rect x="399.5" y="31.7" width="5.200" height="2.200"/><rect x="399.1" y="34.3" width="6" height="0.600"/></g><g fill="#e0e0e0"><rect x="410.79999999999995" y="28.5" width="3.200" height="2.200"/><rect x="410.79999999999995" y="31.7" width="5.200" height="2.200"/><rect x="410.4" y="34.3" width="6" height="0.600"/></g><g fill="#e0e0e0"><rect x="422.4" y="28.5" width="0.700" height="6.400"/><rect x="423.5" y="28.5" width="1.800" height="5.600"/><rect x="425.8" y="28.5" width="1.800" height="3.600"/></g><g fill="#e0e0e0"><rect x="433.29999999999995" y="28.5" width="0.700" height="6.400"/><rect x="434.4" y="28.5" width="1.800" height="5.600"/><rect x="436.7" y="28.5" width="1.800" height="3.600"/></g><g fill="#e0e0e0"><rect x="444.9" y="28.5" width="0.700" height="6.400"/><rect x="446.0" y="28.5" width="1.800" height="5.600"/><rect x="448.3" y="28.5" width="1.800" height="3.600"/></g><g stroke="#dcdcdc" stroke-width="0.600" fill="none"><rect x="458" y="28.200" width="7" height="7" stroke-dasharray="1 0.700"/><rect x="460.500" y="30.700" width="2" height="2" fill="#dcdcdc"/></g><path d="M480.90 30.90L482.00 29.80L483.10 30.90M480.90 32.70L482.00 33.80L483.10 32.70" fill="none" stroke="#c8c8c8" stroke-width="0.6"/><path d="M531.70 30.90L532.80 29.80L533.90 30.90M531.70 32.70L532.80 33.80L533.90 32.70" fill="none" stroke="#c8c8c8" stroke-width="0.6"/><path d="M583.60 30.90L584.70 29.80L585.80 30.90M583.60 32.70L584.70 33.80L585.80 32.70" fill="none" stroke="#c8c8c8" stroke-width="0.6"/><rect x="622.700" y="27.800" width="8" height="8" rx="1" fill="#2e2e2e" stroke="#777" stroke-width="0.500"/><path d="M624.500 31.800h4.400" stroke="#eee" stroke-width="1.400" stroke-linecap="round"/><path d="M645.90 30.90L647.00 29.80L648.10 30.90M645.90 32.70L647.00 33.80L648.10 32.70" fill="none" stroke="#c8c8c8" stroke-width="0.6"/><g stroke="#dcdcdc" stroke-width="0.800" fill="none"><path d="M689.500 29.300l5 5M694.500 29.300l-5 5"/><path d="M703 29.500h4v4.500M703 34l4-4.500M724 29.500h4v4.500M724 34l4-4.500"/></g><path d="M712.60 31.70L713.50 32.70L714.40 31.70" fill="none" stroke="#d4d4d4" stroke-width="0.75"/><path d="M734.60 31.70L735.50 32.70L736.40 31.70" fill="none" stroke="#d4d4d4" stroke-width="0.75"/><g fill="#dcdcdc"><rect x="1024" y="29" width="1.700" height="1.700"/><rect x="1026.500" y="29" width="1.700" height="1.700"/><rect x="1024" y="31.500" width="1.700" height="1.700"/><rect x="1026.500" y="31.500" width="1.700" height="1.700"/><rect x="1034.500" y="28.700" width="0.800" height="5.600"/><rect x="1036" y="29.500" width="2.400" height="1.500"/><rect x="1036" y="32" width="1.600" height="1.500"/></g><path d="M1055.2 30.3h3.6M1055.2 31.5h3.6M1055.2 32.7h3.6" stroke="#8a8a8a" stroke-width="0.5"/><path d="M21.200 44.200l1.600 1.600M22.800 44.200l-1.600 1.600" stroke="#aaa" stroke-width="0.500"/><path d="M167.900 44.200l1.600 1.600M169.500 44.200l-1.600 1.600" stroke="#eee" stroke-width="0.500"/><path d="M3 43.500h2M3 44.500h2" stroke="#888" stroke-width="0.400"/><rect x="2.600" y="202.300" width="11" height="8.900" rx="0.800" fill="#1c1c1c"/><g transform="translate(8.2 56.5)" fill="none" stroke="#d4d4d4" stroke-width="0.800" stroke-linecap="round" stroke-linejoin="round"><path d="M-2 -3.500L-2 3L-0.300 1.500L0.900 3.800L1.900 3.300L0.800 1.100L2.800 0.900Z" stroke-width="0.600"/></g><g transform="translate(8.2 67.3)" fill="none" stroke="#d4d4d4" stroke-width="0.800" stroke-linecap="round" stroke-linejoin="round"><path d="M-2 -3.500L-2 3L-0.300 1.500L0.900 3.800L1.900 3.300L0.800 1.100L2.800 0.900Z" fill="#d4d4d4" stroke-width="0.400"/></g><g transform="translate(8.2 77.5)" fill="none" stroke="#d4d4d4" stroke-width="0.800" stroke-linecap="round" stroke-linejoin="round"><path d="M-3 3L1 -1"/><path d="M1.500 -3.200v1.400M3.300 -1.500h-1.400M2.800 -2.800l-0.800 0.800M0.200 -2.800l0.600 0.600" stroke-width="0.500"/></g><g transform="translate(8.2 88)" fill="none" stroke="#d4d4d4" stroke-width="0.800" stroke-linecap="round" stroke-linejoin="round"><path d="M-2.500 -2.500L-2.500 2L-1 0.800L0.200 3L1 2.600L-0.100 0.500L1.500 0.300Z" fill="#d4d4d4" stroke-width="0.300"/><path d="M1 -3a2.500 1.500 0 1 1 0.100 3" stroke-width="0.500"/></g><g transform="translate(8.2 97.8)" fill="none" stroke="#d4d4d4" stroke-width="0.800" stroke-linecap="round" stroke-linejoin="round"><path d="M-3 3.500L-1.500 -0.500L1 -3L3 -1L0.500 1.500Z" fill="#d4d4d4" stroke-width="0.300"/><path d="M-3 3.500L-0.500 1" stroke="#535353" stroke-width="0.500"/></g><g transform="translate(8.2 107.5)" fill="none" stroke="#d4d4d4" stroke-width="0.800" stroke-linecap="round" stroke-linejoin="round"><path d="M-3 3L-1.500 -0.500L0.500 -2.500L2.500 -0.500L0.500 1.500Z" fill="#d4d4d4" stroke-width="0.300"/><path d="M0 3.500q2.500 0.300 3.300 -2" stroke-width="0.600"/></g><g transform="translate(8.2 117.3)" fill="none" stroke="#d4d4d4" stroke-width="0.800" stroke-linecap="round" stroke-linejoin="round"><path d="M-3 -3.300h6v1.600h-0.700v-0.700h-1.600v5.400h1v0.800h-3.400v-0.800h1v-5.400h-1.600v0.700h-0.700z" fill="#d4d4d4" stroke="none"/></g><g transform="translate(8.2 127.5)" fill="none" stroke="#d4d4d4" stroke-width="0.800" stroke-linecap="round" stroke-linejoin="round"><path d="M-3 3L3 -3" stroke-width="0.700"/></g><g transform="translate(8.2 137.6)" fill="none" stroke="#d4d4d4" stroke-width="0.800" stroke-linecap="round" stroke-linejoin="round"><rect x="-3.200" y="-2.600" width="6.400" height="5.200" stroke-width="0.700"/></g><g transform="translate(8.2 147.5)" fill="none" stroke="#d4d4d4" stroke-width="0.800" stroke-linecap="round" stroke-linejoin="round"><path d="M3.200 -3.300L-0.500 0.800" stroke-width="1.300"/><path d="M-1 1.200q-2 0 -2.300 2.300q2.300 0.200 2.900 -1.600z" fill="#d4d4d4" stroke="none"/></g><g transform="translate(8.2 157.3)" fill="none" stroke="#d4d4d4" stroke-width="0.800" stroke-linecap="round" stroke-linejoin="round"><path d="M3 -3.300L-1.800 1.600" stroke-width="1.400"/><path d="M-2.300 1.300l-0.900 2.100l2.100 -0.900z" fill="#d4d4d4" stroke="none"/></g><g transform="translate(8.2 167.2)" fill="none" stroke="#d4d4d4" stroke-width="0.800" stroke-linecap="round" stroke-linejoin="round"><path d="M0.500 -3.200L3.300 -0.400L0 3L-3 0.200Z" fill="#d4d4d4" stroke="none"/><path d="M-1.200 -1.500L1.600 1.300" stroke="#535353" stroke-width="0.500"/></g><g transform="translate(8.2 177)" fill="none" stroke="#d4d4d4" stroke-width="0.800" stroke-linecap="round" stroke-linejoin="round"><path d="M2.600 1.500a3 3 0 1 1 -0.500 -3.500" stroke-width="0.800"/><path d="M2.800 -3.600v2h-2" stroke-width="0.700"/></g><g transform="translate(8.2 187)" fill="none" stroke="#d4d4d4" stroke-width="0.800" stroke-linecap="round" stroke-linejoin="round"><rect x="-3.300" y="-0.500" width="3.800" height="3.800" stroke-width="0.600"/><rect x="-1.300" y="-3.300" width="4.600" height="4.600" stroke-width="0.600" stroke-dasharray="1 0.600"/></g><g transform="translate(8.2 196.8)" fill="none" stroke="#d4d4d4" stroke-width="0.800" stroke-linecap="round" stroke-linejoin="round"><path d="M-3.300 2.500q3.300 -5 6.600 0" stroke-width="0.700"/><path d="M0 -3.300v2.600M-1.200 -2l1.200 -1.300l1.200 1.300" stroke-width="0.600"/></g><g transform="translate(8.2 206.5)" fill="none" stroke="#d4d4d4" stroke-width="0.800" stroke-linecap="round" stroke-linejoin="round"><path d="M-3.600 -2.600L-3.600 2.400L-2.300 1.300L-1.500 3L-0.800 2.700L-1.600 1L-0.200 0.800Z" fill="#fff" stroke="none"/><rect x="0.300" y="-2.200" width="3.200" height="4.200" stroke="#fff" stroke-width="0.700"/></g><g transform="translate(8.2 217.2)" fill="none" stroke="#d4d4d4" stroke-width="0.800" stroke-linecap="round" stroke-linejoin="round"><circle cx="-0.800" cy="-0.600" r="2.400" stroke-width="0.600"/><circle cx="1.200" cy="0.800" r="2.400" stroke-width="0.600"/><path d="M1.500 1L1.500 3.800L2.300 3.100L2.900 4.200" stroke-width="0.500"/></g><g transform="translate(8.2 227.3)" fill="none" stroke="#d4d4d4" stroke-width="0.800" stroke-linecap="round" stroke-linejoin="round"><path d="M-3.300 -2.500L3.300 -1v3.200L-3.300 3.300ZM-1 -2v5M1.200 -1.500v4M-3.300 0.400L3.300 0.600" stroke-width="0.500"/></g><g transform="translate(8.2 236.8)" fill="none" stroke="#d4d4d4" stroke-width="0.800" stroke-linecap="round" stroke-linejoin="round"><rect x="-3.200" y="-3" width="6.400" height="6" stroke-width="0.600"/><path d="M-3.200 0q1.600 -1.400 3.200 0t3.200 0M0 -3q-1.400 1.500 0 3t0 3" stroke-width="0.500"/></g><g transform="translate(8.2 246.8)" fill="none" stroke="#d4d4d4" stroke-width="0.800" stroke-linecap="round" stroke-linejoin="round"><rect x="-3.200" y="-2.800" width="6.400" height="5.600" stroke-width="0.600"/><rect x="-3.200" y="-2.800" width="2.800" height="5.600" fill="#d4d4d4" stroke="none"/><rect x="-0.400" y="-2.800" width="1.600" height="5.600" fill="#9a9a9a" stroke="none"/></g><g transform="translate(8.2 256.8)" fill="none" stroke="#d4d4d4" stroke-width="0.800" stroke-linecap="round" stroke-linejoin="round"><path d="M2.800 -3L-2.800 2.600" stroke-width="1.100"/><path d="M-3.300 3.300l1 -1" stroke-width="0.600"/></g><g transform="translate(8.2 266.7)" fill="none" stroke="#d4d4d4" stroke-width="0.800" stroke-linecap="round" stroke-linejoin="round"><path d="M2.400 -2.600L-2 1.800L-3.200 3.200" stroke-width="1"/><path d="M1 -3.300L3.300 -1" stroke-width="1.300"/></g><g transform="translate(8.2 276.8)" fill="none" stroke="#d4d4d4" stroke-width="0.800" stroke-linecap="round" stroke-linejoin="round"><circle cx="-1.800" cy="1.800" r="1.500" fill="#d4d4d4" stroke="none"/><rect x="0.600" y="-3.300" width="2.700" height="2.700" stroke-width="0.600"/><path d="M-0.700 0.700L0.700 -0.700" stroke-width="0.600" stroke-dasharray="0.600 0.600"/></g><g transform="translate(8.2 286.8)" fill="none" stroke="#d4d4d4" stroke-width="0.800" stroke-linecap="round" stroke-linejoin="round"><rect x="-2.800" y="-0.800" width="3.400" height="4.200" rx="0.600" fill="#d4d4d4" stroke="none"/><path d="M-1.800 -0.800v-1.400h1.600" stroke-width="0.700"/><path d="M1.300 -3h0.100M2.600 -2.300h0.100M1.800 -1.300h0.100M3 -0.600h0.100" stroke-width="0.700"/></g><g transform="translate(8.2 296.8)" fill="none" stroke="#d4d4d4" stroke-width="0.800" stroke-linecap="round" stroke-linejoin="round"><g fill="#d4d4d4" stroke="none"><rect x="-3" y="0.300" width="1.500" height="3"/><rect x="-0.800" y="-3.300" width="1.500" height="6.600"/><rect x="1.400" y="-1.300" width="1.500" height="4.600"/></g></g><g transform="translate(8.2 306.9)" fill="none" stroke="#d4d4d4" stroke-width="0.800" stroke-linecap="round" stroke-linejoin="round"><path d="M-3.500 -1.800h7M-3.500 1.800h5M-1.800 -3.500v7M1.800 -3.500v5" stroke-width="0.600"/></g><g transform="translate(8.2 317.2)" fill="none" stroke="#d4d4d4" stroke-width="0.800" stroke-linecap="round" stroke-linejoin="round"><path d="M-3.200 3.200L2.500 -2.500" stroke-width="0.700"/><path d="M1 -3.400L3.400 -1L0.800 0.400L-0.600 -1Z" fill="#d4d4d4" stroke="none"/></g><g transform="translate(8.2 327.3)" fill="none" stroke="#d4d4d4" stroke-width="0.800" stroke-linecap="round" stroke-linejoin="round"><path d="M-1.800 3.500L-3 0.500l0.700 -0.500l0.900 1V-2.500h0.900V-3.300h0.900v0.500h0.900v0.500h0.900V2l-0.600 1.500Z" fill="#d4d4d4" stroke="none"/></g><g transform="translate(8.2 337.3)" fill="none" stroke="#d4d4d4" stroke-width="0.800" stroke-linecap="round" stroke-linejoin="round"><circle cx="-0.600" cy="-0.600" r="2.300" stroke-width="0.800"/><path d="M1.100 1.100L3.200 3.200" stroke-width="1"/></g><path d="M12.900 60.5h1.200v-1.200z" fill="#9a9a9a"/><path d="M12.900 71.3h1.200v-1.200z" fill="#9a9a9a"/><path d="M12.900 81.5h1.200v-1.200z" fill="#9a9a9a"/><path d="M12.900 92h1.200v-1.200z" fill="#9a9a9a"/><path d="M12.900 101.8h1.200v-1.200z" fill="#9a9a9a"/><path d="M12.900 111.5h1.200v-1.200z" fill="#9a9a9a"/><path d="M12.900 121.3h1.200v-1.200z" fill="#9a9a9a"/><path d="M12.900 131.5h1.200v-1.200z" fill="#9a9a9a"/><path d="M12.900 141.6h1.200v-1.200z" fill="#9a9a9a"/><path d="M12.900 151.5h1.200v-1.200z" fill="#9a9a9a"/><path d="M12.900 161.3h1.200v-1.200z" fill="#9a9a9a"/><path d="M12.900 171.2h1.200v-1.200z" fill="#9a9a9a"/><path d="M12.900 181h1.200v-1.200z" fill="#9a9a9a"/><path d="M12.900 191h1.200v-1.200z" fill="#9a9a9a"/><path d="M12.900 200.8h1.200v-1.200z" fill="#9a9a9a"/><path d="M12.900 210.5h1.200v-1.200z" fill="#9a9a9a"/><path d="M12.900 221.2h1.200v-1.200z" fill="#9a9a9a"/><path d="M12.900 231.3h1.200v-1.200z" fill="#9a9a9a"/><path d="M12.900 240.8h1.200v-1.200z" fill="#9a9a9a"/><path d="M12.900 250.8h1.200v-1.200z" fill="#9a9a9a"/><path d="M12.900 260.8h1.200v-1.200z" fill="#9a9a9a"/><path d="M12.900 270.7h1.200v-1.200z" fill="#9a9a9a"/><path d="M12.900 280.8h1.200v-1.200z" fill="#9a9a9a"/><path d="M12.900 290.8h1.200v-1.200z" fill="#9a9a9a"/><path d="M12.900 300.8h1.200v-1.200z" fill="#9a9a9a"/><path d="M12.900 310.9h1.200v-1.200z" fill="#9a9a9a"/><path d="M12.900 321.2h1.200v-1.200z" fill="#9a9a9a"/><path d="M12.900 331.3h1.200v-1.200z" fill="#9a9a9a"/><path d="M12.900 341.3h1.200v-1.200z" fill="#9a9a9a"/><rect x="2.200" y="345.300" width="2.600" height="2.600" fill="#fff" stroke="#222" stroke-width="0.300"/><rect x="3.600" y="346.700" width="2.600" height="2.600" fill="none" stroke="#ddd" stroke-width="0.500"/><path d="M11.500 346.200q2 -0.200 2.200 2.200M13.700 348.400l-0.900 -0.900M13.700 348.400l0.900 -0.900" fill="none" stroke="#ddd" stroke-width="0.500"/><rect x="6.5" y="356.7" width="8.3" height="8" fill="#fff" stroke="#777" stroke-width="0.4"/><path d="M6.8 364.4L14.5 357.0" stroke="#e0202a" stroke-width="1.400"/><rect x="8.700" y="358.900" width="3.900" height="3.800" fill="#535353"/><path d="M6.800 364.400L14.500 357" stroke="#e0202a" stroke-width="1.100"/><rect x="2.300" y="353.300" width="7.500" height="7" fill="#7c9926" stroke="#a9c24c" stroke-width="0.500"/><rect x="2.700" y="367.700" width="2.800" height="2.800" fill="#7c9926" stroke="#aaa" stroke-width="0.300"/><rect x="7.500" y="367.700" width="2.800" height="2.800" fill="#fff"/><rect x="8.900" y="367.700" width="1.400" height="2.800" fill="#222"/><rect x="11.8" y="367.7" width="2.8" height="2.8" fill="#fff" stroke="#aaa" stroke-width="0.4"/><path d="M12.100000000000001 370.2L14.3 368.0" stroke="#e0202a" stroke-width="1.400"/><circle cx="8.200" cy="378" r="1.700" fill="#d4d4d4"/><rect x="6.700" y="376" width="2.400" height="1.400" fill="none" stroke="#d4d4d4" stroke-width="0.400"/><rect x="4.300" y="386.300" width="6" height="3.800" fill="none" stroke="#d4d4d4" stroke-width="0.700"/><rect x="6.500" y="384.900" width="6" height="3.800" fill="#535353" stroke="#d4d4d4" stroke-width="0.700"/><g fill="#d4d4d4"><circle cx="6" cy="401.300" r="0.600"/><circle cx="8.200" cy="401.300" r="0.600"/><circle cx="10.400" cy="401.300" r="0.600"/></g><rect x="67.700" y="115" width="16.300" height="60.700" fill="#535353"/><rect x="67.700" y="115" width="16.300" height="3.400" fill="#3d3d3d"/><path d="M74 116.700h3.600" stroke="#6a6a6a" stroke-width="0.500"/><path d="M70 122.500h11.600" stroke="#666" stroke-width="0.400"/><g stroke="#6e6e6e" stroke-width="0.600" fill="none"><path d="M73.500 129.500l5 5M78.500 129.500l-5 5"/><rect x="73.500" y="137.500" width="4.600" height="4.600" stroke-dasharray="1 0.800"/></g><circle cx="75.200" cy="147.200" r="2" fill="#eee"/><path d="M78.600 145v4" stroke="#bbb" stroke-width="0.500"/><rect x="71.700" y="152.300" width="8.600" height="8.200" fill="#262626"/><g transform="translate(76 156.400)"><rect x="-2.300" y="-2.300" width="4.600" height="4.600" stroke="#fff" stroke-width="0.600" fill="none"/><g fill="#fff"><rect x="-3.200" y="-3.200" width="1.700" height="1.700"/><rect x="1.500" y="-3.200" width="1.700" height="1.700"/><rect x="-3.200" y="1.500" width="1.700" height="1.700"/><rect x="1.500" y="1.500" width="1.700" height="1.700"/></g></g><g transform="translate(76 167)"><path d="M-2.300 -2.300L2.300 -1.500L1.500 2.300L-2.300 1.500Z" stroke="#ddd" stroke-width="0.500" fill="none"/><g fill="#ddd"><rect x="-3" y="-3" width="1.500" height="1.500"/><rect x="1.500" y="-2.300" width="1.500" height="1.500"/><rect x="-3" y="0.800" width="1.500" height="1.500"/><rect x="0.800" y="1.500" width="1.500" height="1.500"/></g></g><path d="M41.80 596.10L42.70 597.10L43.60 596.10" fill="none" stroke="#d4d4d4" stroke-width="0.75"/><path d="M72.90 596.10L73.80 597.10L74.70 596.10" fill="none" stroke="#d4d4d4" stroke-width="0.75"/><path d="M114.10 596.10L115.00 597.10L115.90 596.10" fill="none" stroke="#d4d4d4" stroke-width="0.75"/><g fill="#6a6a6a"><path d="M82 595.400v2.400l1.800-1.200zM89 595.400v2.400l1.800-1.200zM124 595.400v2.400l1.800-1.200zM131.500 595.400v2.400l1.800-1.200z"/></g><path d="M223.30 595.70L224.30 596.60L223.30 597.50" fill="none" stroke="#c8c8c8" stroke-width="0.6"/><path d="M231.700 595.400v2.400" stroke="#888" stroke-width="0.500"/><path d="M932.0 49.0h3.6M932.0 50.2h3.6M932.0 51.400000000000006h3.6" stroke="#bdbdbd" stroke-width="0.5"/><path d="M932.300 40.300l0.800 0.800l-0.800 0.800M933.800 40.300l0.800 0.800l-0.800 0.800M1062.300 40.300l0.800 0.800l-0.800 0.800M1063.800 40.300l0.800 0.800l-0.800 0.800M1044.800 40.300l0.800 0.800l-0.800 0.800M1046.300 40.300l0.800 0.800l-0.800 0.800" stroke="#8a8a8a" stroke-width="0.400" fill="none"/><g stroke="#cfcfcf" stroke-width="0.500" fill="none"><circle cx="834.600" cy="62.300" r="1.300"/><path d="M835.600 63.300l1.100 1.100"/></g><path d="M837.85 62.95L838.50 63.65L839.15 62.95" fill="none" stroke="#d4d4d4" stroke-width="0.4"/><path d="M928.85 62.05L930.00 63.35L931.15 62.05" fill="none" stroke="#d4d4d4" stroke-width="0.75"/><path d="M832 67.3H933" stroke="#5b5b5b" stroke-width="0.400"/><path d="M928.85 72.75L930.00 74.05L931.15 72.75" fill="none" stroke="#d4d4d4" stroke-width="0.75"/><path d="M832 78H933" stroke="#5b5b5b" stroke-width="0.400"/><g transform="translate(835.5 87.5)"><path d="M-2.400 -2.600h3.600v1h-0.500v-0.400h-0.900v4.200h0.600v0.600h-2v-0.600h0.600v-4.200h-0.900v0.400h-0.500z" fill="#e6e6e6"/><path d="M1.300 -0.400h2.200v0.700h-0.300v-0.200h-0.500v2.400h0.400v0.400h-1.400v-0.400h0.400v-2.400h-0.500v0.200h-0.300z" fill="#e6e6e6"/></g><path d="M842.90 86.60L844.00 85.50L845.10 86.60M842.90 88.40L844.00 89.50L845.10 88.40" fill="none" stroke="#c8c8c8" stroke-width="0.6"/><path d="M873.55 86.85L874.70 88.15L875.85 86.85" fill="none" stroke="#d4d4d4" stroke-width="0.75"/><path d="M846.5 91.8H877.2" stroke="#5b5b5b" stroke-width="0.400"/><g transform="translate(890.7 87.5)" fill="#e6e6e6"><path d="M-2.800 -3v6" stroke="#e6e6e6" stroke-width="0.400"/><path d="M-3.500 -2l0.700 -1l0.700 1zM-3.500 2l0.700 1l0.700 -1z"/><path d="M-1 0.200L0.600 -2.800L2.200 0.200h-0.700l-0.300 -0.700h-1.200l-0.300 0.700zM-1 3.200L0.600 0.600L2.200 3.200z" opacity="0.900"/></g><path d="M898.90 86.60L900.00 85.50L901.10 86.60M898.90 88.40L900.00 89.50L901.10 88.40" fill="none" stroke="#c8c8c8" stroke-width="0.6"/><path d="M929.55 86.85L930.70 88.15L931.85 86.85" fill="none" stroke="#d4d4d4" stroke-width="0.75"/><path d="M902.5 91.8H933.2" stroke="#5b5b5b" stroke-width="0.400"/><g transform="translate(835.5 97.9)"><path d="M-2.400 -2.600h3.600v1h-0.500v-0.400h-0.900v4.200h0.600v0.600h-2v-0.600h0.600v-4.200h-0.900v0.400h-0.500z" fill="#e6e6e6"/><path d="M2.800 -3v6" stroke="#e6e6e6" stroke-width="0.400"/><path d="M2.100 -2l0.700 -1l0.700 1zM2.100 2l0.700 1l0.700 -1z" fill="#e6e6e6"/></g><path d="M842.90 97.00L844.00 95.90L845.10 97.00M842.90 98.80L844.00 99.90L845.10 98.80" fill="none" stroke="#c8c8c8" stroke-width="0.6"/><path d="M873.55 97.25L874.70 98.55L875.85 97.25" fill="none" stroke="#d4d4d4" stroke-width="0.75"/><path d="M846.5 102.2H877.2" stroke="#5b5b5b" stroke-width="0.400"/><g transform="translate(890.7 97.9)"><path d="M-2.400 -2.600h3.600v1h-0.500v-0.400h-0.900v4.200h0.600v0.600h-2v-0.600h0.600v-4.200h-0.900v0.400h-0.500z" fill="#e6e6e6"/><path d="M-3 3.200h6" stroke="#e6e6e6" stroke-width="0.400"/></g><path d="M898.90 97.00L900.00 95.90L901.10 97.00M898.90 98.80L900.00 99.90L901.10 98.80" fill="none" stroke="#c8c8c8" stroke-width="0.6"/><path d="M929.55 97.25L930.70 98.55L931.85 97.25" fill="none" stroke="#d4d4d4" stroke-width="0.75"/><path d="M902.5 102.2H933.2" stroke="#5b5b5b" stroke-width="0.400"/><g transform="translate(835.5 108.8)"><path d="M-3 -2.500l1.300 3.800l1.300 -3.800" stroke="#dcdcdc" stroke-width="0.600" fill="none"/><path d="M0.300 1.300L1.700 -2.500L3.100 1.300M0.800 0.200h1.800" stroke="#dcdcdc" stroke-width="0.600" fill="none"/><path d="M-2 3h4" stroke="#dcdcdc" stroke-width="0.400"/></g><path d="M842.90 107.90L844.00 106.80L845.10 107.90M842.90 109.70L844.00 110.80L845.10 109.70" fill="none" stroke="#c8c8c8" stroke-width="0.6"/><path d="M873.55 108.15L874.70 109.45L875.85 108.15" fill="none" stroke="#d4d4d4" stroke-width="0.75"/><path d="M846.5 113.1H877.2" stroke="#5b5b5b" stroke-width="0.400"/><g transform="translate(890.7 108.8)"><rect x="-3" y="-2.800" width="6" height="4.600" fill="none" stroke="#dcdcdc" stroke-width="0.500"/><path d="M-1.800 0.800L-0.900 -1.800L0 0.800M0.400 0.800L1.300 -1.800L2.200 0.800" stroke="#dcdcdc" stroke-width="0.500" fill="none"/><path d="M-3 3h6" stroke="#dcdcdc" stroke-width="0.400"/></g><path d="M898.90 107.90L900.00 106.80L901.10 107.90M898.90 109.70L900.00 110.80L901.10 109.70" fill="none" stroke="#c8c8c8" stroke-width="0.6"/><path d="M929.55 108.15L930.70 109.45L931.85 108.15" fill="none" stroke="#d4d4d4" stroke-width="0.75"/><path d="M902.5 113.1H933.2" stroke="#5b5b5b" stroke-width="0.400"/><g transform="translate(835.5 122.7)"><path d="M-3 -2.500h2v5h-2M3 -2.500h-2v5h2" fill="none" stroke="#cfcfcf" stroke-width="0.500"/><path d="M-0.600 0.900L0 -1.500L0.600 0.900" fill="none" stroke="#cfcfcf" stroke-width="0.500"/></g><path d="M842.90 121.80L844.00 120.70L845.10 121.80M842.90 123.60L844.00 124.70L845.10 123.60" fill="none" stroke="#c8c8c8" stroke-width="0.6"/><path d="M873.55 122.05L874.70 123.35L875.85 122.05" fill="none" stroke="#d4d4d4" stroke-width="0.75"/><path d="M846.5 127.0H877.2" stroke="#5b5b5b" stroke-width="0.400"/><g transform="translate(835.500 133.300)"><path d="M-3 -2.500h4.500M-3 2.500h4.500" stroke="#cfcfcf" stroke-width="0.400"/><path d="M-2.400 1.300L-0.800 -1.800L0.800 1.300M-1.800 0.300h2" fill="none" stroke="#cfcfcf" stroke-width="0.600"/></g><path d="M873.55 132.65L874.70 133.95L875.85 132.65" fill="none" stroke="#d4d4d4" stroke-width="0.75"/><path d="M842 137.6H877" stroke="#5b5b5b" stroke-width="0.400"/><g transform="translate(893 133.300)"><path d="M-3 -2.500h4.500M-3 2.500h4.500" stroke="#cfcfcf" stroke-width="0.400"/><path d="M-2.400 1.300L-0.800 -1.800L0.800 1.300M-1.800 0.300h2" fill="none" stroke="#cfcfcf" stroke-width="0.600"/></g><path d="M929.55 132.65L930.70 133.95L931.85 132.65" fill="none" stroke="#d4d4d4" stroke-width="0.75"/><path d="M899 137.6H933" stroke="#5b5b5b" stroke-width="0.400"/><g transform="translate(835.5 147.5)"><path d="M-3.200 1.800L-1.800 -2L-0.400 1.800M-2.700 0.600h1.800" fill="none" stroke="#dcdcdc" stroke-width="0.600"/><path d="M0.400 0.200l1 -2.200l1 2.200M0.800 -0.600h1.200" fill="none" stroke="#dcdcdc" stroke-width="0.500"/><path d="M2.900 -2.800v5.200" stroke="#dcdcdc" stroke-width="0.300"/></g><path d="M842.90 146.60L844.00 145.50L845.10 146.60M842.90 148.40L844.00 149.50L845.10 148.40" fill="none" stroke="#c8c8c8" stroke-width="0.6"/><path d="M873.55 146.85L874.70 148.15L875.85 146.85" fill="none" stroke="#d4d4d4" stroke-width="0.75"/><path d="M846.5 151.8H877.2" stroke="#5b5b5b" stroke-width="0.400"/><g transform="translate(892 147.5)"><circle r="2.800" fill="none" stroke="#dcdcdc" stroke-width="0.500"/><path d="M-1.200 -1.300h2.400v0.700h-0.800v2.600h-0.800v-2.600h-0.800z" fill="#dcdcdc"/></g><path d="M898.90 146.60L900.00 145.50L901.10 146.60M898.90 148.40L900.00 149.50L901.10 148.40" fill="none" stroke="#c8c8c8" stroke-width="0.6"/><path d="M929.55 146.85L930.70 148.15L931.85 146.85" fill="none" stroke="#d4d4d4" stroke-width="0.75"/><path d="M902.5 151.8H933.2" stroke="#5b5b5b" stroke-width="0.400"/><path d="M916.3 161.8H920.2" stroke="#5b5b5b" stroke-width="0.400"/><path d="M927.3 158.9H932.3" stroke="#5b5b5b" stroke-width="0.400"/><path d="M871.35 170.85L872.50 172.15L873.65 170.85" fill="none" stroke="#d4d4d4" stroke-width="0.75"/><path d="M832 175.8H876" stroke="#5b5b5b" stroke-width="0.400"/><path d="M929.35 170.85L930.50 172.15L931.65 170.85" fill="none" stroke="#d4d4d4" stroke-width="0.75"/><g fill="none" stroke="#cfcfcf" stroke-width="0.500"><rect x="913.700" y="184.800" width="4.600" height="3.400"/><path d="M914.700 184.800v-1.400h2.600v1.400M915.300 186.500h1.400"/><circle cx="930.700" cy="186" r="2.400"/><path d="M930.700 184.700v0.200M930.700 185.700v1.700"/></g><rect x="832.3" y="195.8" width="8.400" height="8.400" rx="0.600" fill="#2e2e2e"/><g transform="translate(836.5 200)"><rect x="-2.600" y="-2.600" width="5.200" height="5.200" fill="none" stroke="#eee" stroke-width="0.600"/><path d="M-1.400 -1h2.600M-0.100 -1v2.500" stroke="#eee" stroke-width="0.600"/></g><rect x="847.8" y="195.8" width="8.400" height="8.400" rx="0.600" fill="#2e2e2e"/><g transform="translate(852 200)"><rect x="-2.600" y="-2.600" width="5.200" height="5.200" fill="none" stroke="#eee" stroke-width="0.600"/><path d="M-1.500 0h3M-1 -1.300h2M0 -1.300v2.600" stroke="#eee" stroke-width="0.500"/></g><rect x="864.5999999999999" y="195.8" width="8.400" height="8.400" rx="0.600" fill="#2e2e2e"/><g transform="translate(868.8 200)"><rect x="-2.600" y="-2.600" width="5.200" height="5.200" fill="none" stroke="#eee" stroke-width="0.600"/><path d="M-1.500 1.300L0 -1.500L1.500 1.300" stroke="#eee" stroke-width="0.600" fill="none"/><path d="M-3.200 -3.200h2M1.200 3.200h2" stroke="#eee" stroke-width="0.500"/></g><rect x="882.8" y="195.8" width="8.400" height="8.400" rx="0.600" fill="#2e2e2e"/><g transform="translate(887 200)"><path d="M-2.800 2L-1.200 -2.200L0.400 2M-2.200 0.700h2" stroke="#eee" stroke-width="0.700" fill="none"/><path d="M1.200 0.200q1.600 -1 1.600 0.400v1.400M2.800 1q-1.800 0 -1.600 0.700q0.300 0.700 1.600 -0.100" stroke="#eee" stroke-width="0.500" fill="none"/></g><rect x="908.8" y="195.8" width="8.400" height="8.400" rx="0.600" fill="#2e2e2e"/><g transform="translate(913 200)"><path d="M-2 2.400L0 -2.600L2 2.400M-1.200 0.700h2.400" stroke="#eee" stroke-width="0.800" fill="none"/></g><rect x="925.8" y="195.8" width="8.400" height="8.400" rx="0.600" fill="#2e2e2e"/><g transform="translate(930 200)"><path d="M-1.600 2.600L0.400 -2.400L1.600 2.600M-0.800 0.900h1.800" stroke="#eee" stroke-width="0.800" fill="none"/><path d="M-2.600 -0.500l1.200 -0.800" stroke="#eee" stroke-width="0.500"/></g><path d="M932.0 213.0h3.6M932.0 214.2h3.6M932.0 215.39999999999998h3.6" stroke="#bdbdbd" stroke-width="0.5"/><rect x="833.5" y="234" width="4" height="4" fill="#e8e8e8"/><rect x="835.5" y="236" width="4" height="4" fill="#e8e8e8"/><rect x="848.5" y="234" width="4" height="4" fill="#e8e8e8"/><rect x="850.5" y="236" width="4" height="4" fill="#535353" stroke="#e8e8e8" stroke-width="0.400"/><rect x="863" y="234" width="4" height="4" fill="none" stroke="#e8e8e8" stroke-width="0.400"/><rect x="865" y="236" width="4" height="4" fill="none" stroke="#e8e8e8" stroke-width="0.400"/><rect x="865" y="236" width="2" height="2" fill="#e8e8e8"/><rect x="877.8" y="234" width="4" height="4" fill="#e8e8e8"/><rect x="879.8" y="236" width="4" height="4" fill="#e8e8e8"/><rect x="879.8" y="236" width="2" height="2" fill="#535353"/><rect x="835" y="255.8" width="4" height="4" fill="#e8e8e8" stroke="#535353" stroke-width="0.300"/><rect x="837" y="257.8" width="4" height="4" fill="#cfcfcf" stroke="#535353" stroke-width="0.400"/><rect x="851" y="255.8" width="4" height="4" fill="#bdbdbd"/><rect x="853" y="257.8" width="4" height="4" fill="#e8e8e8" stroke="#535353" stroke-width="0.400"/><rect x="867" y="255.8" width="4" height="4" fill="#e8e8e8"/><rect x="869" y="257.8" width="4" height="4" fill="#e8e8e8"/><rect x="883.7" y="255.8" width="4" height="4" fill="none" stroke="#bbb" stroke-width="0.400"/><rect x="885.7" y="257.8" width="2" height="2" fill="#e8e8e8"/><rect x="900" y="255.8" width="4" height="4" fill="none" stroke="#cfcfcf" stroke-width="0.500"/><rect x="902" y="257.8" width="4" height="4" fill="none" stroke="#cfcfcf" stroke-width="0.500"/><rect x="918" y="257.8" width="4" height="4" fill="none" stroke="#bbb" stroke-width="0.400"/><rect x="916" y="255.8" width="4" height="4" fill="#e8e8e8"/><rect x="918" y="257.8" width="2" height="2" fill="#535353"/><path d="M932.0 271.5h3.6M932.0 272.7h3.6M932.0 273.9h3.6" stroke="#bdbdbd" stroke-width="0.5"/><rect x="832.300" y="283.300" width="7.600" height="7.600" fill="#7c9926" stroke="#c9dc7c" stroke-width="0.600"/><path d="M836.100 284.500v5.200" stroke="#5d7a12" stroke-width="0.400"/><path d="M834.1 296.9q2.400 -2.600 4.800 0q-2.400 2.600 -4.800 0z" fill="none" stroke="#cfcfcf" stroke-width="0.500"/><circle cx="836.5" cy="296.9" r="0.800" fill="#cfcfcf"/><path d="M845.50 296.00L846.50 296.90L845.50 297.80" fill="none" stroke="#c8c8c8" stroke-width="0.6"/><rect x="881" y="293.8" width="6.2" height="6.2" fill="#fff" stroke="#222" stroke-width="0.4"/><path d="M881.3 299.7L886.9000000000001 294.1" stroke="#e0202a" stroke-width="1.400"/><path d="M834.1 308q2.400 -2.600 4.800 0q-2.400 2.600 -4.800 0z" fill="none" stroke="#cfcfcf" stroke-width="0.500"/><circle cx="836.5" cy="308" r="0.800" fill="#cfcfcf"/><path d="M845.50 307.10L846.50 308.00L845.50 308.90" fill="none" stroke="#c8c8c8" stroke-width="0.6"/><rect x="881" y="304.900" width="6.200" height="6.200" fill="#7c9926" stroke="#dfe8b0" stroke-width="0.600"/><path d="M834.1 318.8q2.400 -2.600 4.800 0q-2.400 2.600 -4.800 0z" fill="none" stroke="#666" stroke-width="0.500"/><circle cx="836.5" cy="318.8" r="0.800" fill="#666"/><path d="M832 324.3H934" stroke="#5b5b5b" stroke-width="0.400"/><g fill="none" stroke="#d8d8d8" stroke-width="0.600"><rect x="833.800" y="594.300" width="3.200" height="3.200"/><rect x="845" y="594.300" width="3.200" height="3.200" fill="#d8d8d8"/></g><path d="M859.90 596.15L860.50 596.85L861.10 596.15" fill="none" stroke="#d4d4d4" stroke-width="0.4"/><g fill="none" stroke="#d8d8d8" stroke-width="0.600"><circle cx="902.500" cy="596" r="1.800"/><path d="M901.200 597.300l2.600 -2.600"/></g><g fill="none" stroke="#6c6c6c" stroke-width="0.600"><rect x="909.500" y="594.400" width="3" height="3.200"/><rect x="918.500" y="594.400" width="3" height="3.200"/></g><path d="M1043.7 49.0h3.6M1043.7 50.2h3.6M1043.7 51.400000000000006h3.6" stroke="#bdbdbd" stroke-width="0.5"/><rect x="942" y="58.600" width="2.200" height="2.200" fill="#fff" stroke="#222" stroke-width="0.300"/><rect x="943.200" y="59.800" width="2.200" height="2.200" fill="none" stroke="#ddd" stroke-width="0.400"/><path d="M950.500 59q1.800 -0.200 2 2M952.500 61l-0.800 -0.800M952.500 61l0.800 -0.800" fill="none" stroke="#ddd" stroke-width="0.500"/><rect x="946.8" y="70.7" width="6.6" height="7.2" fill="#fff" stroke="#666" stroke-width="0.4"/><path d="M947.0999999999999 77.60000000000001L953.1 71.0" stroke="#e0202a" stroke-width="1.400"/><rect x="948.700" y="72.700" width="2.800" height="3.200" fill="#535353"/><path d="M947.100 77.600L953.100 71" stroke="#e0202a" stroke-width="1"/><rect x="942" y="66" width="6.800" height="6.800" fill="#7c9926" stroke="#a9c24c" stroke-width="0.500"/><path d="M976.8 67.4h3.400l-1.700 -2.600z" fill="#f2f2f2"/><path d="M1002.1999999999999 80.6h3.400l-1.700 -2.600z" fill="#f2f2f2"/><path d="M995.0 94.0h3.400l-1.700 -2.600z" fill="#f2f2f2"/><rect x="942.6" y="102.9" width="4.8" height="4.8" fill="#fff" stroke="#666" stroke-width="0.4"/><path d="M942.9 107.4L947.1 103.2" stroke="#e0202a" stroke-width="1.400"/><rect x="948.200" y="102.900" width="4.800" height="4.800" fill="#000"/><rect x="953.600" y="102.900" width="4.800" height="4.800" fill="#fff"/><path d="M1043.7 130.15h3.6M1043.7 131.35h3.6M1043.7 132.54999999999998h3.6" stroke="#bdbdbd" stroke-width="0.5"/><rect x="947" y="145" width="7" height="7" fill="#fff" stroke="#666" stroke-width="0.4"/><path d="M947.3 151.7L953.7 145.3" stroke="#e0202a" stroke-width="1.400"/><rect x="949" y="147" width="3" height="3" fill="#535353"/><path d="M947.300 151.700L953.700 145.300" stroke="#e0202a" stroke-width="1"/><rect x="942" y="140.400" width="7.400" height="7.800" fill="#7c9926" stroke="#a9c24c" stroke-width="0.500"/><rect x="1030" y="142.300" width="5" height="6" fill="#8a8a8a"/><path d="M1030 144.300h5M1030 146.300h5" stroke="#6e6e6e" stroke-width="0.400"/><rect x="1038.400" y="140.800" width="8.800" height="9" rx="0.600" fill="#262626"/><rect x="1040" y="142.400" width="5.600" height="5.800" fill="#f4f4f4"/><path d="M1041.900 142.400v5.800M1043.800 142.400v5.800M1040 144.300h5.600M1040 146.300h5.600" stroke="#262626" stroke-width="0.400"/><rect x="942.00" y="155.2" width="5.815" height="5.6" fill="#fff"/><path d="M942.30 160.50L947.52 155.5" stroke="#e0202a" stroke-width="0.900"/><rect x="947.82" y="155.2" width="5.815" height="5.6" fill="#fff"/><circle cx="950.72" cy="158.00" r="1.300" fill="none" stroke="#222" stroke-width="0.400"/><path d="M950.72 155.79999999999998v4.400M948.52 158.00h4.400" stroke="#222" stroke-width="0.400"/><rect x="953.63" y="155.2" width="5.865" height="5.6" fill="#ffffff"/><rect x="959.45" y="155.2" width="5.865" height="5.6" fill="#000000"/><rect x="965.26" y="155.2" width="5.865" height="5.6" fill="#ff0000"/><rect x="971.08" y="155.2" width="5.865" height="5.6" fill="#ffff00"/><rect x="976.89" y="155.2" width="5.865" height="5.6" fill="#00ff00"/><rect x="982.71" y="155.2" width="5.865" height="5.6" fill="#00ffff"/><rect x="988.52" y="155.2" width="5.865" height="5.6" fill="#0000ff"/><rect x="994.34" y="155.2" width="5.865" height="5.6" fill="#ff00ff"/><rect x="1000.15" y="155.2" width="5.865" height="5.6" fill="#c1272d"/><rect x="1005.97" y="155.2" width="5.865" height="5.6" fill="#ed1c24"/><rect x="1011.78" y="155.2" width="5.865" height="5.6" fill="#f15a24"/><rect x="1017.60" y="155.2" width="5.865" height="5.6" fill="#f7931e"/><rect x="1023.41" y="155.2" width="5.865" height="5.6" fill="#fbb03b"/><rect x="1029.22" y="155.2" width="5.865" height="5.6" fill="#fcee21"/><rect x="1035.04" y="155.2" width="5.865" height="5.6" fill="#d9e021"/><rect x="942.00" y="161.3" width="5.865" height="5.6" fill="#8cc63f"/><rect x="947.82" y="161.3" width="5.865" height="5.6" fill="#39b54a"/><rect x="953.63" y="161.3" width="5.865" height="5.6" fill="#009245"/><rect x="959.45" y="161.3" width="5.865" height="5.6" fill="#006837"/><rect x="965.26" y="161.3" width="5.865" height="5.6" fill="#22b573"/><rect x="971.08" y="161.3" width="5.865" height="5.6" fill="#00a99d"/><rect x="976.89" y="161.3" width="5.865" height="5.6" fill="#29abe2"/><rect x="982.71" y="161.3" width="5.865" height="5.6" fill="#0071bc"/><rect x="988.52" y="161.3" width="5.865" height="5.6" fill="#2e3192"/><rect x="994.34" y="161.3" width="5.865" height="5.6" fill="#1b1464"/><rect x="1000.15" y="161.3" width="5.865" height="5.6" fill="#662d91"/><rect x="1005.97" y="161.3" width="5.865" height="5.6" fill="#93278f"/><rect x="1011.78" y="161.3" width="5.865" height="5.6" fill="#9e005d"/><rect x="1017.60" y="161.3" width="5.865" height="5.6" fill="#d4145a"/><rect x="1023.41" y="161.3" width="5.865" height="5.6" fill="#ed1e79"/><rect x="1029.22" y="161.3" width="5.865" height="5.6" fill="#c7b299"/><rect x="1035.04" y="161.3" width="5.865" height="5.6" fill="#998675"/><rect x="942.00" y="167.5" width="5.865" height="5.6" fill="#736357"/><rect x="947.82" y="167.5" width="5.865" height="5.6" fill="#534741"/><rect x="953.63" y="167.5" width="5.865" height="5.6" fill="#c69c6d"/><rect x="959.45" y="167.5" width="5.865" height="5.6" fill="#a67c52"/><rect x="965.26" y="167.5" width="5.865" height="5.6" fill="#8c6239"/><rect x="971.08" y="167.5" width="5.865" height="5.6" fill="#754c24"/><rect x="976.89" y="167.5" width="5.865" height="5.6" fill="#603813"/><rect x="982.71" y="167.5" width="5.865" height="5.6" fill="#42210b"/><linearGradient id="g28"><stop offset="0" stop-color="#fff"/><stop offset="1" stop-color="#000"/></linearGradient><rect x="988.52" y="167.5" width="5.815" height="5.6" fill="url(#g28)"/><linearGradient id="g29"><stop offset="0" stop-color="#fff"/><stop offset="1" stop-color="#29abe2"/></linearGradient><rect x="994.34" y="167.5" width="5.815" height="5.6" fill="url(#g29)"/><linearGradient id="g210"><stop offset="0" stop-color="#fbd3e0"/><stop offset="1" stop-color="#ee7fa6"/></linearGradient><rect x="1000.15" y="167.5" width="5.815" height="5.6" fill="url(#g210)"/><linearGradient id="g211"><stop offset="0" stop-color="#f7c35f"/><stop offset="1" stop-color="#f08a1e"/></linearGradient><rect x="1005.97" y="167.5" width="5.815" height="5.6" fill="url(#g211)"/><rect x="1011.78" y="167.5" width="5.815" height="5.6" fill="#f0f0f0"/><path d="M1014.69 167.5v5.6M1011.78 170.3h5.815" stroke="#c8c8c8" stroke-width="0.400"/><linearGradient id="g213"><stop offset="0" stop-color="#4aa3df"/><stop offset="1" stop-color="#0b69b3"/></linearGradient><rect x="1017.60" y="167.5" width="5.815" height="5.6" fill="url(#g213)"/><rect x="1023.41" y="167.5" width="5.815" height="5.6" fill="#e0efe0"/><path d="M1026.32 167.5v5.6M1023.41 170.3h5.815" stroke="#c8c8c8" stroke-width="0.400"/><path d="M942.80 175.20000000000002h1.600l0.500 0.600h2.200v2.600h-4.300z" fill="#e0e0e0"/><rect x="947.82" y="173.8" width="5.865" height="5.6" fill="#000000"/><rect x="953.63" y="173.8" width="5.865" height="5.6" fill="#1a1a1a"/><rect x="959.45" y="173.8" width="5.865" height="5.6" fill="#333333"/><rect x="965.26" y="173.8" width="5.865" height="5.6" fill="#4d4d4d"/><rect x="971.08" y="173.8" width="5.865" height="5.6" fill="#666666"/><rect x="976.89" y="173.8" width="5.865" height="5.6" fill="#808080"/><rect x="982.71" y="173.8" width="5.865" height="5.6" fill="#999999"/><rect x="988.52" y="173.8" width="5.865" height="5.6" fill="#b3b3b3"/><rect x="994.34" y="173.8" width="5.865" height="5.6" fill="#cccccc"/><rect x="1000.15" y="173.8" width="5.865" height="5.6" fill="#e6e6e6"/><rect x="1005.97" y="173.8" width="5.865" height="5.6" fill="#f2f2f2"/><path d="M942.80 181.70000000000002h1.600l0.500 0.600h2.200v2.600h-4.300z" fill="#e0e0e0"/><rect x="947.82" y="180.3" width="5.865" height="5.6" fill="#3fa9f5"/><rect x="953.63" y="180.3" width="5.865" height="5.6" fill="#7ac943"/><rect x="959.45" y="180.3" width="5.865" height="5.6" fill="#ff931e"/><rect x="965.26" y="180.3" width="5.865" height="5.6" fill="#ff1d25"/><rect x="971.08" y="180.3" width="5.865" height="5.6" fill="#ff7bac"/><rect x="976.89" y="180.3" width="5.865" height="5.6" fill="#e6e6e6"/><g fill="#d8d8d8"><rect x="944" y="270.300" width="1" height="3.400"/><rect x="945.500" y="270.300" width="1" height="3.400"/><rect x="947" y="270.300" width="1.600" height="3.400"/><rect x="990" y="270.300" width="3" height="3.400"/><path d="M1011.300 270.800h2l0.600 0.600h2.600v2.600h-5.200z"/></g><g fill="none" stroke="#d8d8d8" stroke-width="0.600"><rect x="1023.300" y="270.200" width="3.800" height="3.800"/></g><g fill="none" stroke="#6c6c6c" stroke-width="0.600"><path d="M954.500 272.500a2 1.600 0 1 1 4 0"/><rect x="1001" y="270.500" width="3.600" height="3.200"/><rect x="1033.500" y="270.300" width="3" height="3.600"/></g><path d="M949.20 272.85L949.80 273.55L950.40 272.85" fill="none" stroke="#d4d4d4" stroke-width="0.4"/><path d="M994.40 272.85L995.00 273.55L995.60 272.85" fill="none" stroke="#d4d4d4" stroke-width="0.4"/><path d="M1043.7 281.7h3.6M1043.7 282.9h3.6M1043.7 284.09999999999997h3.6" stroke="#bdbdbd" stroke-width="0.5"/><rect x="946.800" y="280.800" width="3.800" height="3.800" fill="#f4f4f4"/><path d="M978.90 295.10L980.00 294.00L981.10 295.10M978.90 296.90L980.00 298.00L981.10 296.90" fill="none" stroke="#c8c8c8" stroke-width="0.6"/><path d="M1012.10 295.50L1013.00 296.50L1013.90 295.50" fill="none" stroke="#d4d4d4" stroke-width="0.75"/><g fill="none" stroke="#8a8a8a" stroke-width="0.600"><rect x="978.500" y="304.500" width="4.400" height="4.400"/><rect x="988" y="304.500" width="4.400" height="4.400"/><rect x="997.800" y="304.500" width="4.400" height="4.400"/></g><g fill="none" stroke="#8a8a8a" stroke-width="0.600"><path d="M978 319.500v-4h4.400M987.500 319.500v-2.500q0 -1.500 1.500 -1.500h2.900M997.300 319.500v-2.500l1.500 -1.500h2.900"/></g><g fill="none" stroke="#8a8a8a" stroke-width="0.600"><path d="M978 330.500v-3q0 -1.500 2 -1.500h2M987.500 330.500v-3q0 -1.500 2 -1.500h2M997 330.500v-3q0 -1.500 2 -1.500h2"/></g><rect x="942" y="340.800" width="3.800" height="3.800" fill="#f4f4f4"/><path d="M943 342.700h1.800" stroke="#333" stroke-width="0.500"/><g fill="none" stroke="#6a6a6a" stroke-width="0.500" stroke-dasharray="1 0.700"><rect x="1018.500" y="340.300" width="5" height="4.600"/><rect x="1026.500" y="340.300" width="5" height="4.600"/><rect x="1037" y="340.300" width="4" height="4.600"/><rect x="1043.500" y="340.300" width="4" height="4.600"/></g><path d="M998.35 374.35L999.50 375.65L1000.65 374.35" fill="none" stroke="#777" stroke-width="0.75"/><path d="M1029.85 374.35L1031.00 375.65L1032.15 374.35" fill="none" stroke="#777" stroke-width="0.75"/><path d="M1041 373.500h3.600M1043.600 372.500l1 1l-1 1M1041 376.500h3.600M1042 375.500l-1 1l1 1" fill="none" stroke="#777" stroke-width="0.500"/><path d="M1042 385.500q2 2 0 4" fill="none" stroke="#6c6c6c" stroke-width="0.500"/><g fill="none" stroke="#8a8a8a" stroke-width="0.600"><path d="M977.500 399.500h4.500M980.500 398l1.500 1.500l-1.500 1.500M987.500 399.500h4.500M990.500 398l1.500 1.500l-1.500 1.500M992.700 397.500v4"/></g><path d="M1019.85 413.35L1021.00 414.65L1022.15 413.35" fill="none" stroke="#777" stroke-width="0.75"/><g fill="none" stroke="#777" stroke-width="0.500"><path d="M1031 411.500v4.500M1034 411.500v4.500M1032 412.500l-1 1.200l1 1.200M1033 412.500l1 1.200l-1 1.200"/><path d="M1041 411.500h4M1041 416h4M1042 412.500l1 -1l1 1M1042 415l1 1l1 -1"/></g><path d="M1043.7 427.0h3.6M1043.7 428.2h3.6M1043.7 429.4h3.6" stroke="#bdbdbd" stroke-width="0.5"/><g fill="none" stroke="#d0d0d0" stroke-width="0.600"><circle cx="948.300" cy="442.300" r="1.400"/><path d="M949.400 443.400l1.300 1.300"/></g><path d="M1039.700 440.500h4.600l-1.700 2.200v2.300l-1.200 -0.800v-1.500z" fill="#e0e0e0"/><path d="M943.6 456q2.400 -2.600 4.800 0q-2.400 2.600 -4.800 0z" fill="none" stroke="#e0e0e0" stroke-width="0.500"/><circle cx="946" cy="456" r="0.800" fill="#e0e0e0"/><path d="M965.45 455.00L966.55 456.00L965.45 457.00" fill="none" stroke="#d8d8d8" stroke-width="0.6"/><rect x="972.700" y="452" width="6.200" height="8" fill="#fdfdfd" stroke="#999" stroke-width="0.300"/><circle cx="975.800" cy="456" r="0.500" fill="#fbb01b"/><circle cx="1042" cy="456" r="1.800" fill="none" stroke="#d8d8d8" stroke-width="0.500"/><path d="M1036.700 454.500v3" stroke="#7a8aa0" stroke-width="0.500"/><path d="M1044.800 451h2.400v2.400z" fill="#e8e8e8"/><g transform="translate(0 1.100)"><g fill="none" stroke="#d8d8d8" stroke-width="0.600"><rect x="969.500" y="593.200" width="3.600" height="3"/><path d="M972 594.500l1.800 1.600M980 596.500v-3h3.200M982 592.300l1.400 1.200l-1.400 1.200"/><circle cx="991.500" cy="594.300" r="1.400"/><path d="M992.600 595.400l1.300 1.300"/><circle cx="1002.800" cy="594.800" r="1.800"/><path d="M1012 593.300h3.800M1013.500 595h2.300M1012 596.500h3.800"/><rect x="1023.300" y="593" width="3.600" height="3.600"/><path d="M1025.100 593.800v2M1024.100 594.800h2"/></g><rect x="1033.500" y="593" width="3" height="3.600" fill="none" stroke="#6c6c6c" stroke-width="0.600"/></g><path transform="translate(0 1.100)" d="M1001.800 594.800l0.700 0.800l1.300 -1.600" fill="none" stroke="#d8d8d8" stroke-width="0.500"/><g fill="none" stroke="#dcdcdc" stroke-width="0.600"><path d="M1056.500 51.500h5M1056.500 53.300h5M1056.500 55.100h5"/><rect x="1056.500" y="62.800" width="5" height="5"/><path d="M1058.500 66.300l2 -2M1059 64.300h1.500v1.500"/></g></svg>
</div></body></html>
